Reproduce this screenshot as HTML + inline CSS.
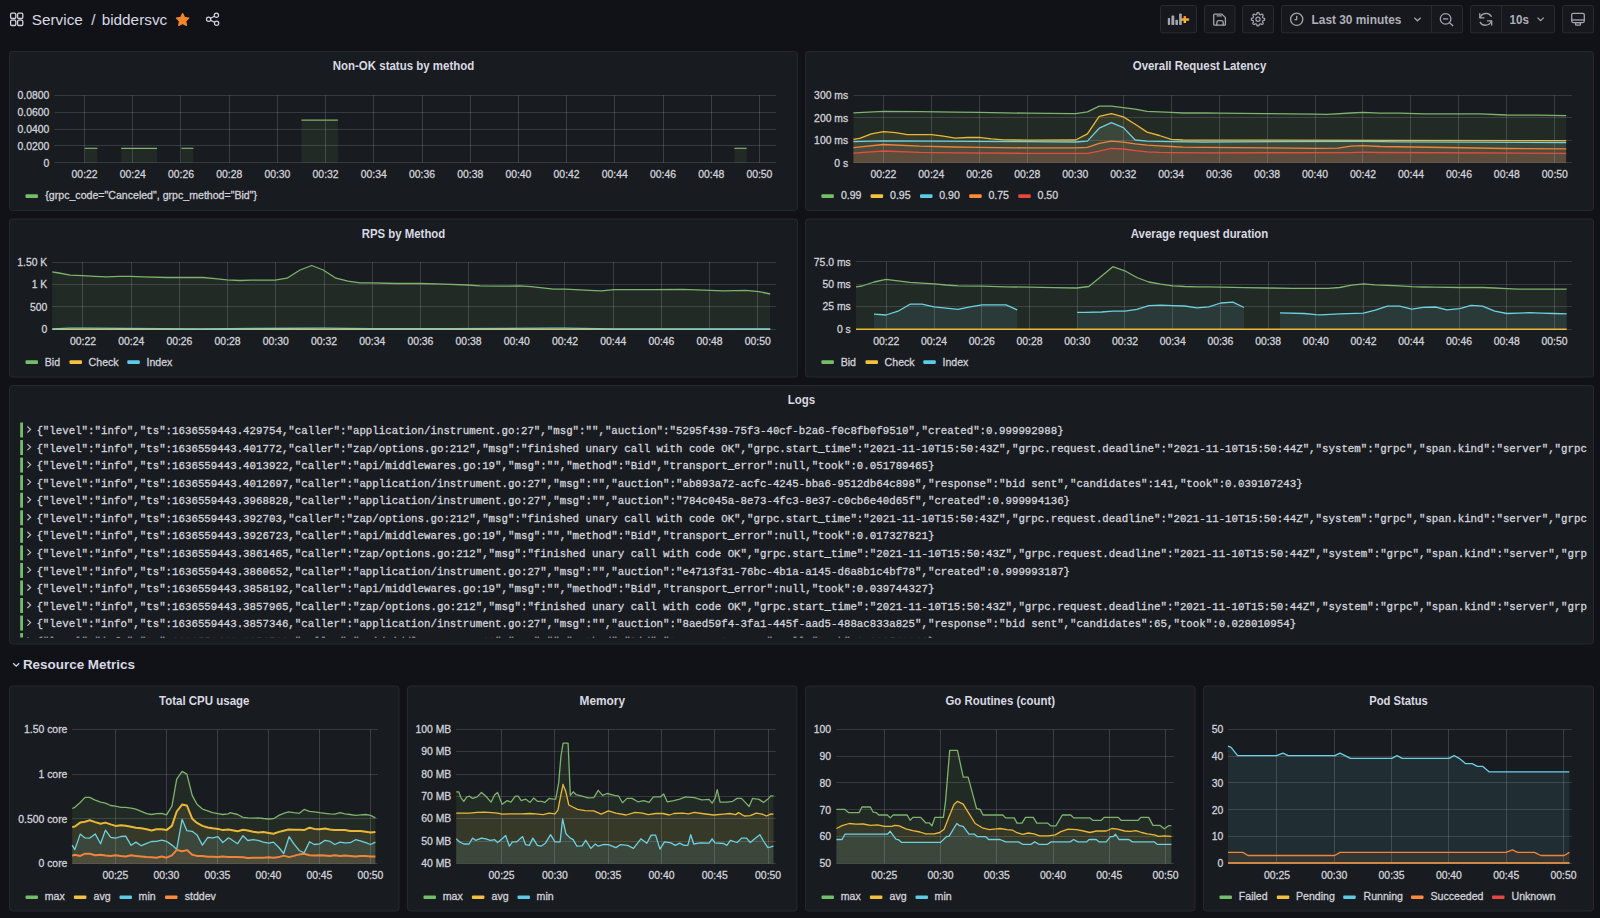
<!DOCTYPE html><html><head><meta charset="utf-8"><style>html,body{margin:0;padding:0;background:#111217;width:1600px;height:918px;overflow:hidden}svg{display:block}</style></head><body>
<svg width="1600" height="918" viewBox="0 0 1600 918">
<rect x="0" y="0" width="1600" height="918" rx="0" fill="#111217"/>
<rect x="10.6" y="13.2" width="5.2" height="5.3" rx="1.2" fill="none" stroke="#d2d3de" stroke-width="1.3"/>
<rect x="17.6" y="13.2" width="5.2" height="5.3" rx="1.2" fill="none" stroke="#d2d3de" stroke-width="1.3"/>
<rect x="10.6" y="20.2" width="5.2" height="5.3" rx="1.2" fill="none" stroke="#d2d3de" stroke-width="1.3"/>
<rect x="17.6" y="20.2" width="5.2" height="5.3" rx="1.2" fill="none" stroke="#d2d3de" stroke-width="1.3"/>
<text x="31.8" y="25.2" font-family="Liberation Sans" font-size="15.3" fill="#d8d9e3" text-anchor="start" font-weight="normal">Service</text>
<text x="91.3" y="25.2" font-family="Liberation Sans" font-size="15.3" fill="#d8d9e3" text-anchor="start" font-weight="normal">/</text>
<text x="101.7" y="25.2" font-family="Liberation Sans" font-size="15.3" fill="#d8d9e3" text-anchor="start" font-weight="normal" textLength="65.5" lengthAdjust="spacingAndGlyphs">biddersvc</text>
<polygon points="182.60,13.60 184.54,17.43 188.78,18.09 185.74,21.12 186.42,25.36 182.60,23.40 178.78,25.36 179.46,21.12 176.42,18.09 180.66,17.43" fill="#f0862a" stroke="#f0862a" stroke-width="1.3" stroke-linejoin="round"/>
<g fill="none" stroke="#d2d3de" stroke-width="1.2"><circle cx="216.4" cy="15.3" r="2.15"/><circle cx="208.6" cy="19.3" r="2.15"/><circle cx="216.6" cy="23.2" r="2.15"/><line x1="210.6" y1="18.2" x2="214.4" y2="16.3"/><line x1="210.6" y1="20.4" x2="214.6" y2="22.2"/></g>
<rect x="1160.5" y="5.5" width="36" height="27.3" rx="2" fill="#17181d" stroke="#2a2b31" stroke-width="1"/>
<rect x="1204.5" y="5.5" width="30.5" height="27.3" rx="2" fill="#17181d" stroke="#2a2b31" stroke-width="1"/>
<rect x="1242.5" y="5.5" width="31" height="27.3" rx="2" fill="#17181d" stroke="#2a2b31" stroke-width="1"/>
<rect x="1281.5" y="5.5" width="181" height="27.3" rx="2" fill="#17181d" stroke="#2a2b31" stroke-width="1"/>
<rect x="1470.5" y="5.5" width="84" height="27.3" rx="2" fill="#17181d" stroke="#2a2b31" stroke-width="1"/>
<rect x="1562.5" y="5.5" width="31" height="27.3" rx="2" fill="#17181d" stroke="#2a2b31" stroke-width="1"/>
<line x1="1431.5" y1="6" x2="1431.5" y2="32.5" stroke="#2a2b31"/>
<line x1="1501.5" y1="6" x2="1501.5" y2="32.5" stroke="#2a2b31"/>
<rect x="1167.8" y="18.1" width="2.3" height="6.899999999999999" rx="0.7" fill="#a3a4ae"/>
<rect x="1171.4" y="15.4" width="2.9" height="9.6" rx="0.7" fill="#a3a4ae"/>
<rect x="1175.4" y="19.8" width="2.6" height="5.199999999999999" rx="0.7" fill="#a3a4ae"/>
<rect x="1179.1" y="13.5" width="2.7" height="11.5" rx="0.7" fill="#a3a4ae"/>
<defs><linearGradient id="plusg" x1="0" y1="0" x2="0" y2="1"><stop offset="0" stop-color="#f47f2f"/><stop offset="1" stop-color="#f8d22a"/></linearGradient></defs>
<path d="M1183.6,15.9 h2.4 v2.4 h3.1 v2.4 h-3.1 v2.2 h-2.4 v-2.2 h-2.7 v-2.4 h2.7 z" fill="url(#plusg)"/>
<g fill="none" stroke="#a3a4ae" stroke-width="1.3" stroke-linejoin="round" stroke-linecap="round"><path d="M1214.6,14.1 h7.3 l3.5,3.5 v6.7 a0.9,0.9 0 0 1 -0.9,0.9 h-9.9 a0.9,0.9 0 0 1 -0.9,-0.9 v-9.3 a0.9,0.9 0 0 1 0.9,-0.9 z"/><path d="M1217.1,15.9 h4.2"/><path d="M1216.9,25 v-2.4 a1.9,1.9 0 0 1 1.9,-1.9 h2.5 a1.9,1.9 0 0 1 1.9,1.9 v2.4"/></g>
<polygon points="1264.65,19.30 1264.64,19.56 1264.61,19.82 1264.53,20.07 1264.30,20.30 1263.74,20.44 1263.18,20.54 1262.93,20.69 1262.82,20.87 1262.74,21.05 1262.67,21.23 1262.59,21.42 1262.51,21.60 1262.47,21.80 1262.54,22.08 1262.86,22.55 1263.16,23.05 1263.17,23.37 1263.04,23.61 1262.88,23.81 1262.70,24.00 1262.51,24.18 1262.31,24.34 1262.07,24.47 1261.75,24.46 1261.25,24.16 1260.78,23.84 1260.50,23.77 1260.30,23.81 1260.12,23.89 1259.93,23.97 1259.75,24.04 1259.57,24.12 1259.39,24.23 1259.24,24.48 1259.14,25.04 1259.00,25.60 1258.77,25.83 1258.52,25.91 1258.26,25.94 1258.00,25.95 1257.74,25.94 1257.48,25.91 1257.23,25.83 1257.00,25.60 1256.86,25.04 1256.76,24.48 1256.61,24.23 1256.43,24.12 1256.25,24.04 1256.07,23.97 1255.88,23.89 1255.70,23.81 1255.50,23.77 1255.22,23.84 1254.75,24.16 1254.25,24.46 1253.93,24.47 1253.69,24.34 1253.49,24.18 1253.30,24.00 1253.12,23.81 1252.96,23.61 1252.83,23.37 1252.84,23.05 1253.14,22.55 1253.46,22.08 1253.53,21.80 1253.49,21.60 1253.41,21.42 1253.33,21.23 1253.26,21.05 1253.18,20.87 1253.07,20.69 1252.82,20.54 1252.26,20.44 1251.70,20.30 1251.47,20.07 1251.39,19.82 1251.36,19.56 1251.35,19.30 1251.36,19.04 1251.39,18.78 1251.47,18.53 1251.70,18.30 1252.26,18.16 1252.82,18.06 1253.07,17.91 1253.18,17.73 1253.26,17.55 1253.33,17.37 1253.41,17.18 1253.49,17.00 1253.53,16.80 1253.46,16.52 1253.14,16.05 1252.84,15.55 1252.83,15.23 1252.96,14.99 1253.12,14.79 1253.30,14.60 1253.49,14.42 1253.69,14.26 1253.93,14.13 1254.25,14.14 1254.75,14.44 1255.22,14.76 1255.50,14.83 1255.70,14.79 1255.88,14.71 1256.07,14.63 1256.25,14.56 1256.43,14.48 1256.61,14.37 1256.76,14.12 1256.86,13.56 1257.00,13.00 1257.23,12.77 1257.48,12.69 1257.74,12.66 1258.00,12.65 1258.26,12.66 1258.52,12.69 1258.77,12.77 1259.00,13.00 1259.14,13.56 1259.24,14.12 1259.39,14.37 1259.57,14.48 1259.75,14.56 1259.93,14.63 1260.12,14.71 1260.30,14.79 1260.50,14.83 1260.78,14.76 1261.25,14.44 1261.75,14.14 1262.07,14.13 1262.31,14.26 1262.51,14.42 1262.70,14.60 1262.88,14.79 1263.04,14.99 1263.17,15.23 1263.16,15.55 1262.86,16.05 1262.54,16.52 1262.47,16.80 1262.51,17.00 1262.59,17.18 1262.67,17.37 1262.74,17.55 1262.82,17.73 1262.93,17.91 1263.18,18.06 1263.74,18.16 1264.30,18.30 1264.53,18.53 1264.61,18.78 1264.64,19.04" fill="none" stroke="#a3a4ae" stroke-width="1.25" stroke-linejoin="round"/>
<circle cx="1258.0" cy="19.3" r="2.1" fill="none" stroke="#a3a4ae" stroke-width="1.25"/>
<g fill="none" stroke="#a3a4ae" stroke-width="1.3"><circle cx="1296.7" cy="19.3" r="6.1"/><path d="M1296.7,15.8 v3.8 h-2.2"/></g>
<text x="1311.5" y="23.8" font-family="Liberation Sans" font-size="12" fill="#aeafb9" text-anchor="start" font-weight="bold" textLength="89.9" lengthAdjust="spacingAndGlyphs">Last 30 minutes</text>
<path d="M1414.4,17.8 l3.1,3 l3.1,-3" fill="none" stroke="#a3a4ae" stroke-width="1.3"/>
<g fill="none" stroke="#a3a4ae" stroke-width="1.3"><circle cx="1445.6" cy="18.9" r="5.3"/><line x1="1443" y1="18.9" x2="1448.2" y2="18.9"/><line x1="1449.5" y1="22.8" x2="1453.2" y2="26"/></g>
<g fill="none" stroke="#a3a4ae" stroke-width="1.3" stroke-linecap="round"><path d="M1480.2,17.6 a6.2,6.2 0 0 1 11.1,-1.2"/><path d="M1491.3,21.1 a6.2,6.2 0 0 1 -11.1,1.2"/><path d="M1479.8,13.6 v4.2 h4.2" stroke-linejoin="round"/><path d="M1491.7,25.1 v-4.2 h-4.2" stroke-linejoin="round"/></g>
<text x="1509.6" y="23.6" font-family="Liberation Sans" font-size="12" fill="#aeafb9" text-anchor="start" font-weight="bold" textLength="19.4" lengthAdjust="spacingAndGlyphs">10s</text>
<path d="M1537.5,17.6 l3.1,3 l3.1,-3" fill="none" stroke="#a3a4ae" stroke-width="1.3"/>
<g fill="none" stroke="#a3a4ae" stroke-width="1.3"><rect x="1571.7" y="13.3" width="12.6" height="9.3" rx="1.5"/><line x1="1572" y1="20" x2="1584" y2="20"/><rect x="1575.6" y="22.6" width="4.8" height="2.6" rx="0.6"/></g>
<rect x="9.5" y="51.5" width="788" height="159" rx="3" fill="#181b1f" stroke="#25282e" stroke-width="1"/>
<text x="403.5" y="70.0" font-family="Liberation Sans" font-size="12.6" fill="#d8d9e3" text-anchor="middle" font-weight="bold" textLength="141.5" lengthAdjust="spacingAndGlyphs">Non-OK status by method</text>
<rect x="805.5" y="51.5" width="788" height="159" rx="3" fill="#181b1f" stroke="#25282e" stroke-width="1"/>
<text x="1199.5" y="70.0" font-family="Liberation Sans" font-size="12.6" fill="#d8d9e3" text-anchor="middle" font-weight="bold" textLength="133.5" lengthAdjust="spacingAndGlyphs">Overall Request Latency</text>
<rect x="9.5" y="219.0" width="788" height="158.0" rx="3" fill="#181b1f" stroke="#25282e" stroke-width="1"/>
<text x="403.5" y="237.7" font-family="Liberation Sans" font-size="12.6" fill="#d8d9e3" text-anchor="middle" font-weight="bold" textLength="83.5" lengthAdjust="spacingAndGlyphs">RPS by Method</text>
<rect x="805.5" y="219.0" width="788" height="158.0" rx="3" fill="#181b1f" stroke="#25282e" stroke-width="1"/>
<text x="1199.5" y="237.7" font-family="Liberation Sans" font-size="12.6" fill="#d8d9e3" text-anchor="middle" font-weight="bold" textLength="137.5" lengthAdjust="spacingAndGlyphs">Average request duration</text>
<rect x="9.5" y="385.5" width="1584" height="258.5" rx="3" fill="#181b1f" stroke="#25282e" stroke-width="1"/>
<text x="801.5" y="404.0" font-family="Liberation Sans" font-size="12.6" fill="#d8d9e3" text-anchor="middle" font-weight="bold" textLength="27.5" lengthAdjust="spacingAndGlyphs">Logs</text>
<rect x="9.5" y="686.0" width="389.5" height="225.0" rx="3" fill="#181b1f" stroke="#25282e" stroke-width="1"/>
<text x="204.25" y="704.7" font-family="Liberation Sans" font-size="12.6" fill="#d8d9e3" text-anchor="middle" font-weight="bold" textLength="90.5" lengthAdjust="spacingAndGlyphs">Total CPU usage</text>
<rect x="407.5" y="686.0" width="389.5" height="225.0" rx="3" fill="#181b1f" stroke="#25282e" stroke-width="1"/>
<text x="602.25" y="704.7" font-family="Liberation Sans" font-size="12.6" fill="#d8d9e3" text-anchor="middle" font-weight="bold" textLength="45.5" lengthAdjust="spacingAndGlyphs">Memory</text>
<rect x="805.5" y="686.0" width="389.5" height="225.0" rx="3" fill="#181b1f" stroke="#25282e" stroke-width="1"/>
<text x="1000.25" y="704.7" font-family="Liberation Sans" font-size="12.6" fill="#d8d9e3" text-anchor="middle" font-weight="bold" textLength="109.5" lengthAdjust="spacingAndGlyphs">Go Routines (count)</text>
<rect x="1203.5" y="686.0" width="390" height="225.0" rx="3" fill="#181b1f" stroke="#25282e" stroke-width="1"/>
<text x="1398.5" y="704.7" font-family="Liberation Sans" font-size="12.6" fill="#d8d9e3" text-anchor="middle" font-weight="bold" textLength="58.5" lengthAdjust="spacingAndGlyphs">Pod Status</text>
<path d="M13.2,663.2 l3,3 l3,-3" fill="none" stroke="#d8d9e3" stroke-width="1.3"/>
<text x="22.9" y="669.3" font-family="Liberation Sans" font-size="13.6" fill="#d8d9e3" text-anchor="start" font-weight="bold" textLength="112" lengthAdjust="spacingAndGlyphs">Resource Metrics</text>
<text x="49.3" y="99.0" font-family="Liberation Sans" font-size="10.4" fill="#d0d1da" text-anchor="end" font-weight="normal" stroke="#d0d1da" stroke-width="0.3">0.0800</text>
<text x="49.3" y="115.875" font-family="Liberation Sans" font-size="10.4" fill="#d0d1da" text-anchor="end" font-weight="normal" stroke="#d0d1da" stroke-width="0.3">0.0600</text>
<text x="49.3" y="132.75" font-family="Liberation Sans" font-size="10.4" fill="#d0d1da" text-anchor="end" font-weight="normal" stroke="#d0d1da" stroke-width="0.3">0.0400</text>
<text x="49.3" y="149.625" font-family="Liberation Sans" font-size="10.4" fill="#d0d1da" text-anchor="end" font-weight="normal" stroke="#d0d1da" stroke-width="0.3">0.0200</text>
<text x="49.3" y="166.5" font-family="Liberation Sans" font-size="10.4" fill="#d0d1da" text-anchor="end" font-weight="normal" stroke="#d0d1da" stroke-width="0.3">0</text>
<text x="84.6" y="177.5" font-family="Liberation Sans" font-size="10.4" fill="#d0d1da" text-anchor="middle" font-weight="normal" stroke="#d0d1da" stroke-width="0.3">00:22</text>
<text x="132.8" y="177.5" font-family="Liberation Sans" font-size="10.4" fill="#d0d1da" text-anchor="middle" font-weight="normal" stroke="#d0d1da" stroke-width="0.3">00:24</text>
<text x="181.0" y="177.5" font-family="Liberation Sans" font-size="10.4" fill="#d0d1da" text-anchor="middle" font-weight="normal" stroke="#d0d1da" stroke-width="0.3">00:26</text>
<text x="229.20000000000002" y="177.5" font-family="Liberation Sans" font-size="10.4" fill="#d0d1da" text-anchor="middle" font-weight="normal" stroke="#d0d1da" stroke-width="0.3">00:28</text>
<text x="277.4" y="177.5" font-family="Liberation Sans" font-size="10.4" fill="#d0d1da" text-anchor="middle" font-weight="normal" stroke="#d0d1da" stroke-width="0.3">00:30</text>
<text x="325.6" y="177.5" font-family="Liberation Sans" font-size="10.4" fill="#d0d1da" text-anchor="middle" font-weight="normal" stroke="#d0d1da" stroke-width="0.3">00:32</text>
<text x="373.80000000000007" y="177.5" font-family="Liberation Sans" font-size="10.4" fill="#d0d1da" text-anchor="middle" font-weight="normal" stroke="#d0d1da" stroke-width="0.3">00:34</text>
<text x="422.0" y="177.5" font-family="Liberation Sans" font-size="10.4" fill="#d0d1da" text-anchor="middle" font-weight="normal" stroke="#d0d1da" stroke-width="0.3">00:36</text>
<text x="470.20000000000005" y="177.5" font-family="Liberation Sans" font-size="10.4" fill="#d0d1da" text-anchor="middle" font-weight="normal" stroke="#d0d1da" stroke-width="0.3">00:38</text>
<text x="518.4" y="177.5" font-family="Liberation Sans" font-size="10.4" fill="#d0d1da" text-anchor="middle" font-weight="normal" stroke="#d0d1da" stroke-width="0.3">00:40</text>
<text x="566.6" y="177.5" font-family="Liberation Sans" font-size="10.4" fill="#d0d1da" text-anchor="middle" font-weight="normal" stroke="#d0d1da" stroke-width="0.3">00:42</text>
<text x="614.8000000000001" y="177.5" font-family="Liberation Sans" font-size="10.4" fill="#d0d1da" text-anchor="middle" font-weight="normal" stroke="#d0d1da" stroke-width="0.3">00:44</text>
<text x="663.0000000000001" y="177.5" font-family="Liberation Sans" font-size="10.4" fill="#d0d1da" text-anchor="middle" font-weight="normal" stroke="#d0d1da" stroke-width="0.3">00:46</text>
<text x="711.2" y="177.5" font-family="Liberation Sans" font-size="10.4" fill="#d0d1da" text-anchor="middle" font-weight="normal" stroke="#d0d1da" stroke-width="0.3">00:48</text>
<text x="759.4000000000001" y="177.5" font-family="Liberation Sans" font-size="10.4" fill="#d0d1da" text-anchor="middle" font-weight="normal" stroke="#d0d1da" stroke-width="0.3">00:50</text>
<text x="848.2" y="99.0" font-family="Liberation Sans" font-size="10.4" fill="#d0d1da" text-anchor="end" font-weight="normal" stroke="#d0d1da" stroke-width="0.3">300 ms</text>
<text x="848.2" y="121.5" font-family="Liberation Sans" font-size="10.4" fill="#d0d1da" text-anchor="end" font-weight="normal" stroke="#d0d1da" stroke-width="0.3">200 ms</text>
<text x="848.2" y="144.0" font-family="Liberation Sans" font-size="10.4" fill="#d0d1da" text-anchor="end" font-weight="normal" stroke="#d0d1da" stroke-width="0.3">100 ms</text>
<text x="848.2" y="166.5" font-family="Liberation Sans" font-size="10.4" fill="#d0d1da" text-anchor="end" font-weight="normal" stroke="#d0d1da" stroke-width="0.3">0 s</text>
<text x="883.4" y="177.5" font-family="Liberation Sans" font-size="10.4" fill="#d0d1da" text-anchor="middle" font-weight="normal" stroke="#d0d1da" stroke-width="0.3">00:22</text>
<text x="931.36" y="177.5" font-family="Liberation Sans" font-size="10.4" fill="#d0d1da" text-anchor="middle" font-weight="normal" stroke="#d0d1da" stroke-width="0.3">00:24</text>
<text x="979.3199999999999" y="177.5" font-family="Liberation Sans" font-size="10.4" fill="#d0d1da" text-anchor="middle" font-weight="normal" stroke="#d0d1da" stroke-width="0.3">00:26</text>
<text x="1027.28" y="177.5" font-family="Liberation Sans" font-size="10.4" fill="#d0d1da" text-anchor="middle" font-weight="normal" stroke="#d0d1da" stroke-width="0.3">00:28</text>
<text x="1075.24" y="177.5" font-family="Liberation Sans" font-size="10.4" fill="#d0d1da" text-anchor="middle" font-weight="normal" stroke="#d0d1da" stroke-width="0.3">00:30</text>
<text x="1123.2" y="177.5" font-family="Liberation Sans" font-size="10.4" fill="#d0d1da" text-anchor="middle" font-weight="normal" stroke="#d0d1da" stroke-width="0.3">00:32</text>
<text x="1171.1599999999999" y="177.5" font-family="Liberation Sans" font-size="10.4" fill="#d0d1da" text-anchor="middle" font-weight="normal" stroke="#d0d1da" stroke-width="0.3">00:34</text>
<text x="1219.12" y="177.5" font-family="Liberation Sans" font-size="10.4" fill="#d0d1da" text-anchor="middle" font-weight="normal" stroke="#d0d1da" stroke-width="0.3">00:36</text>
<text x="1267.08" y="177.5" font-family="Liberation Sans" font-size="10.4" fill="#d0d1da" text-anchor="middle" font-weight="normal" stroke="#d0d1da" stroke-width="0.3">00:38</text>
<text x="1315.04" y="177.5" font-family="Liberation Sans" font-size="10.4" fill="#d0d1da" text-anchor="middle" font-weight="normal" stroke="#d0d1da" stroke-width="0.3">00:40</text>
<text x="1363.0" y="177.5" font-family="Liberation Sans" font-size="10.4" fill="#d0d1da" text-anchor="middle" font-weight="normal" stroke="#d0d1da" stroke-width="0.3">00:42</text>
<text x="1410.96" y="177.5" font-family="Liberation Sans" font-size="10.4" fill="#d0d1da" text-anchor="middle" font-weight="normal" stroke="#d0d1da" stroke-width="0.3">00:44</text>
<text x="1458.92" y="177.5" font-family="Liberation Sans" font-size="10.4" fill="#d0d1da" text-anchor="middle" font-weight="normal" stroke="#d0d1da" stroke-width="0.3">00:46</text>
<text x="1506.88" y="177.5" font-family="Liberation Sans" font-size="10.4" fill="#d0d1da" text-anchor="middle" font-weight="normal" stroke="#d0d1da" stroke-width="0.3">00:48</text>
<text x="1554.8400000000001" y="177.5" font-family="Liberation Sans" font-size="10.4" fill="#d0d1da" text-anchor="middle" font-weight="normal" stroke="#d0d1da" stroke-width="0.3">00:50</text>
<text x="47.3" y="265.9" font-family="Liberation Sans" font-size="10.4" fill="#d0d1da" text-anchor="end" font-weight="normal" stroke="#d0d1da" stroke-width="0.3">1.50 K</text>
<text x="47.3" y="288.2333333333333" font-family="Liberation Sans" font-size="10.4" fill="#d0d1da" text-anchor="end" font-weight="normal" stroke="#d0d1da" stroke-width="0.3">1 K</text>
<text x="47.3" y="310.56666666666666" font-family="Liberation Sans" font-size="10.4" fill="#d0d1da" text-anchor="end" font-weight="normal" stroke="#d0d1da" stroke-width="0.3">500</text>
<text x="47.3" y="332.9" font-family="Liberation Sans" font-size="10.4" fill="#d0d1da" text-anchor="end" font-weight="normal" stroke="#d0d1da" stroke-width="0.3">0</text>
<text x="83.0" y="345.0" font-family="Liberation Sans" font-size="10.4" fill="#d0d1da" text-anchor="middle" font-weight="normal" stroke="#d0d1da" stroke-width="0.3">00:22</text>
<text x="131.2" y="345.0" font-family="Liberation Sans" font-size="10.4" fill="#d0d1da" text-anchor="middle" font-weight="normal" stroke="#d0d1da" stroke-width="0.3">00:24</text>
<text x="179.4" y="345.0" font-family="Liberation Sans" font-size="10.4" fill="#d0d1da" text-anchor="middle" font-weight="normal" stroke="#d0d1da" stroke-width="0.3">00:26</text>
<text x="227.60000000000002" y="345.0" font-family="Liberation Sans" font-size="10.4" fill="#d0d1da" text-anchor="middle" font-weight="normal" stroke="#d0d1da" stroke-width="0.3">00:28</text>
<text x="275.8" y="345.0" font-family="Liberation Sans" font-size="10.4" fill="#d0d1da" text-anchor="middle" font-weight="normal" stroke="#d0d1da" stroke-width="0.3">00:30</text>
<text x="324.0" y="345.0" font-family="Liberation Sans" font-size="10.4" fill="#d0d1da" text-anchor="middle" font-weight="normal" stroke="#d0d1da" stroke-width="0.3">00:32</text>
<text x="372.20000000000005" y="345.0" font-family="Liberation Sans" font-size="10.4" fill="#d0d1da" text-anchor="middle" font-weight="normal" stroke="#d0d1da" stroke-width="0.3">00:34</text>
<text x="420.40000000000003" y="345.0" font-family="Liberation Sans" font-size="10.4" fill="#d0d1da" text-anchor="middle" font-weight="normal" stroke="#d0d1da" stroke-width="0.3">00:36</text>
<text x="468.6" y="345.0" font-family="Liberation Sans" font-size="10.4" fill="#d0d1da" text-anchor="middle" font-weight="normal" stroke="#d0d1da" stroke-width="0.3">00:38</text>
<text x="516.8" y="345.0" font-family="Liberation Sans" font-size="10.4" fill="#d0d1da" text-anchor="middle" font-weight="normal" stroke="#d0d1da" stroke-width="0.3">00:40</text>
<text x="565.0" y="345.0" font-family="Liberation Sans" font-size="10.4" fill="#d0d1da" text-anchor="middle" font-weight="normal" stroke="#d0d1da" stroke-width="0.3">00:42</text>
<text x="613.2" y="345.0" font-family="Liberation Sans" font-size="10.4" fill="#d0d1da" text-anchor="middle" font-weight="normal" stroke="#d0d1da" stroke-width="0.3">00:44</text>
<text x="661.4000000000001" y="345.0" font-family="Liberation Sans" font-size="10.4" fill="#d0d1da" text-anchor="middle" font-weight="normal" stroke="#d0d1da" stroke-width="0.3">00:46</text>
<text x="709.6" y="345.0" font-family="Liberation Sans" font-size="10.4" fill="#d0d1da" text-anchor="middle" font-weight="normal" stroke="#d0d1da" stroke-width="0.3">00:48</text>
<text x="757.8000000000001" y="345.0" font-family="Liberation Sans" font-size="10.4" fill="#d0d1da" text-anchor="middle" font-weight="normal" stroke="#d0d1da" stroke-width="0.3">00:50</text>
<text x="850.8" y="265.5" font-family="Liberation Sans" font-size="10.4" fill="#d0d1da" text-anchor="end" font-weight="normal" stroke="#d0d1da" stroke-width="0.3">75.0 ms</text>
<text x="850.8" y="287.96666666666664" font-family="Liberation Sans" font-size="10.4" fill="#d0d1da" text-anchor="end" font-weight="normal" stroke="#d0d1da" stroke-width="0.3">50 ms</text>
<text x="850.8" y="310.43333333333334" font-family="Liberation Sans" font-size="10.4" fill="#d0d1da" text-anchor="end" font-weight="normal" stroke="#d0d1da" stroke-width="0.3">25 ms</text>
<text x="850.8" y="332.9" font-family="Liberation Sans" font-size="10.4" fill="#d0d1da" text-anchor="end" font-weight="normal" stroke="#d0d1da" stroke-width="0.3">0 s</text>
<text x="886.3" y="345.0" font-family="Liberation Sans" font-size="10.4" fill="#d0d1da" text-anchor="middle" font-weight="normal" stroke="#d0d1da" stroke-width="0.3">00:22</text>
<text x="934.03" y="345.0" font-family="Liberation Sans" font-size="10.4" fill="#d0d1da" text-anchor="middle" font-weight="normal" stroke="#d0d1da" stroke-width="0.3">00:24</text>
<text x="981.76" y="345.0" font-family="Liberation Sans" font-size="10.4" fill="#d0d1da" text-anchor="middle" font-weight="normal" stroke="#d0d1da" stroke-width="0.3">00:26</text>
<text x="1029.49" y="345.0" font-family="Liberation Sans" font-size="10.4" fill="#d0d1da" text-anchor="middle" font-weight="normal" stroke="#d0d1da" stroke-width="0.3">00:28</text>
<text x="1077.22" y="345.0" font-family="Liberation Sans" font-size="10.4" fill="#d0d1da" text-anchor="middle" font-weight="normal" stroke="#d0d1da" stroke-width="0.3">00:30</text>
<text x="1124.9499999999998" y="345.0" font-family="Liberation Sans" font-size="10.4" fill="#d0d1da" text-anchor="middle" font-weight="normal" stroke="#d0d1da" stroke-width="0.3">00:32</text>
<text x="1172.6799999999998" y="345.0" font-family="Liberation Sans" font-size="10.4" fill="#d0d1da" text-anchor="middle" font-weight="normal" stroke="#d0d1da" stroke-width="0.3">00:34</text>
<text x="1220.4099999999999" y="345.0" font-family="Liberation Sans" font-size="10.4" fill="#d0d1da" text-anchor="middle" font-weight="normal" stroke="#d0d1da" stroke-width="0.3">00:36</text>
<text x="1268.1399999999999" y="345.0" font-family="Liberation Sans" font-size="10.4" fill="#d0d1da" text-anchor="middle" font-weight="normal" stroke="#d0d1da" stroke-width="0.3">00:38</text>
<text x="1315.87" y="345.0" font-family="Liberation Sans" font-size="10.4" fill="#d0d1da" text-anchor="middle" font-weight="normal" stroke="#d0d1da" stroke-width="0.3">00:40</text>
<text x="1363.6" y="345.0" font-family="Liberation Sans" font-size="10.4" fill="#d0d1da" text-anchor="middle" font-weight="normal" stroke="#d0d1da" stroke-width="0.3">00:42</text>
<text x="1411.33" y="345.0" font-family="Liberation Sans" font-size="10.4" fill="#d0d1da" text-anchor="middle" font-weight="normal" stroke="#d0d1da" stroke-width="0.3">00:44</text>
<text x="1459.06" y="345.0" font-family="Liberation Sans" font-size="10.4" fill="#d0d1da" text-anchor="middle" font-weight="normal" stroke="#d0d1da" stroke-width="0.3">00:46</text>
<text x="1506.79" y="345.0" font-family="Liberation Sans" font-size="10.4" fill="#d0d1da" text-anchor="middle" font-weight="normal" stroke="#d0d1da" stroke-width="0.3">00:48</text>
<text x="1554.52" y="345.0" font-family="Liberation Sans" font-size="10.4" fill="#d0d1da" text-anchor="middle" font-weight="normal" stroke="#d0d1da" stroke-width="0.3">00:50</text>
<text x="67.4" y="733.1" font-family="Liberation Sans" font-size="10.4" fill="#d0d1da" text-anchor="end" font-weight="normal" stroke="#d0d1da" stroke-width="0.3">1.50 core</text>
<text x="67.4" y="777.8666666666667" font-family="Liberation Sans" font-size="10.4" fill="#d0d1da" text-anchor="end" font-weight="normal" stroke="#d0d1da" stroke-width="0.3">1 core</text>
<text x="67.4" y="822.6333333333334" font-family="Liberation Sans" font-size="10.4" fill="#d0d1da" text-anchor="end" font-weight="normal" stroke="#d0d1da" stroke-width="0.3">0.500 core</text>
<text x="67.4" y="867.4000000000001" font-family="Liberation Sans" font-size="10.4" fill="#d0d1da" text-anchor="end" font-weight="normal" stroke="#d0d1da" stroke-width="0.3">0 core</text>
<text x="115.4" y="879.4" font-family="Liberation Sans" font-size="10.4" fill="#d0d1da" text-anchor="middle" font-weight="normal" stroke="#d0d1da" stroke-width="0.3">00:25</text>
<text x="166.4" y="879.4" font-family="Liberation Sans" font-size="10.4" fill="#d0d1da" text-anchor="middle" font-weight="normal" stroke="#d0d1da" stroke-width="0.3">00:30</text>
<text x="217.4" y="879.4" font-family="Liberation Sans" font-size="10.4" fill="#d0d1da" text-anchor="middle" font-weight="normal" stroke="#d0d1da" stroke-width="0.3">00:35</text>
<text x="268.4" y="879.4" font-family="Liberation Sans" font-size="10.4" fill="#d0d1da" text-anchor="middle" font-weight="normal" stroke="#d0d1da" stroke-width="0.3">00:40</text>
<text x="319.4" y="879.4" font-family="Liberation Sans" font-size="10.4" fill="#d0d1da" text-anchor="middle" font-weight="normal" stroke="#d0d1da" stroke-width="0.3">00:45</text>
<text x="370.4" y="879.4" font-family="Liberation Sans" font-size="10.4" fill="#d0d1da" text-anchor="middle" font-weight="normal" stroke="#d0d1da" stroke-width="0.3">00:50</text>
<text x="451.3" y="733.0" font-family="Liberation Sans" font-size="10.4" fill="#d0d1da" text-anchor="end" font-weight="normal" stroke="#d0d1da" stroke-width="0.3">100 MB</text>
<text x="451.3" y="755.3666666666667" font-family="Liberation Sans" font-size="10.4" fill="#d0d1da" text-anchor="end" font-weight="normal" stroke="#d0d1da" stroke-width="0.3">90 MB</text>
<text x="451.3" y="777.7333333333333" font-family="Liberation Sans" font-size="10.4" fill="#d0d1da" text-anchor="end" font-weight="normal" stroke="#d0d1da" stroke-width="0.3">80 MB</text>
<text x="451.3" y="800.1" font-family="Liberation Sans" font-size="10.4" fill="#d0d1da" text-anchor="end" font-weight="normal" stroke="#d0d1da" stroke-width="0.3">70 MB</text>
<text x="451.3" y="822.4666666666667" font-family="Liberation Sans" font-size="10.4" fill="#d0d1da" text-anchor="end" font-weight="normal" stroke="#d0d1da" stroke-width="0.3">60 MB</text>
<text x="451.3" y="844.8333333333334" font-family="Liberation Sans" font-size="10.4" fill="#d0d1da" text-anchor="end" font-weight="normal" stroke="#d0d1da" stroke-width="0.3">50 MB</text>
<text x="451.3" y="867.2" font-family="Liberation Sans" font-size="10.4" fill="#d0d1da" text-anchor="end" font-weight="normal" stroke="#d0d1da" stroke-width="0.3">40 MB</text>
<text x="501.6" y="879.4" font-family="Liberation Sans" font-size="10.4" fill="#d0d1da" text-anchor="middle" font-weight="normal" stroke="#d0d1da" stroke-width="0.3">00:25</text>
<text x="554.9" y="879.4" font-family="Liberation Sans" font-size="10.4" fill="#d0d1da" text-anchor="middle" font-weight="normal" stroke="#d0d1da" stroke-width="0.3">00:30</text>
<text x="608.2" y="879.4" font-family="Liberation Sans" font-size="10.4" fill="#d0d1da" text-anchor="middle" font-weight="normal" stroke="#d0d1da" stroke-width="0.3">00:35</text>
<text x="661.5" y="879.4" font-family="Liberation Sans" font-size="10.4" fill="#d0d1da" text-anchor="middle" font-weight="normal" stroke="#d0d1da" stroke-width="0.3">00:40</text>
<text x="714.8" y="879.4" font-family="Liberation Sans" font-size="10.4" fill="#d0d1da" text-anchor="middle" font-weight="normal" stroke="#d0d1da" stroke-width="0.3">00:45</text>
<text x="768.1" y="879.4" font-family="Liberation Sans" font-size="10.4" fill="#d0d1da" text-anchor="middle" font-weight="normal" stroke="#d0d1da" stroke-width="0.3">00:50</text>
<text x="831.1" y="733.0" font-family="Liberation Sans" font-size="10.4" fill="#d0d1da" text-anchor="end" font-weight="normal" stroke="#d0d1da" stroke-width="0.3">100</text>
<text x="831.1" y="759.84" font-family="Liberation Sans" font-size="10.4" fill="#d0d1da" text-anchor="end" font-weight="normal" stroke="#d0d1da" stroke-width="0.3">90</text>
<text x="831.1" y="786.6800000000001" font-family="Liberation Sans" font-size="10.4" fill="#d0d1da" text-anchor="end" font-weight="normal" stroke="#d0d1da" stroke-width="0.3">80</text>
<text x="831.1" y="813.52" font-family="Liberation Sans" font-size="10.4" fill="#d0d1da" text-anchor="end" font-weight="normal" stroke="#d0d1da" stroke-width="0.3">70</text>
<text x="831.1" y="840.36" font-family="Liberation Sans" font-size="10.4" fill="#d0d1da" text-anchor="end" font-weight="normal" stroke="#d0d1da" stroke-width="0.3">60</text>
<text x="831.1" y="867.2" font-family="Liberation Sans" font-size="10.4" fill="#d0d1da" text-anchor="end" font-weight="normal" stroke="#d0d1da" stroke-width="0.3">50</text>
<text x="884.3" y="879.4" font-family="Liberation Sans" font-size="10.4" fill="#d0d1da" text-anchor="middle" font-weight="normal" stroke="#d0d1da" stroke-width="0.3">00:25</text>
<text x="940.54" y="879.4" font-family="Liberation Sans" font-size="10.4" fill="#d0d1da" text-anchor="middle" font-weight="normal" stroke="#d0d1da" stroke-width="0.3">00:30</text>
<text x="996.78" y="879.4" font-family="Liberation Sans" font-size="10.4" fill="#d0d1da" text-anchor="middle" font-weight="normal" stroke="#d0d1da" stroke-width="0.3">00:35</text>
<text x="1053.02" y="879.4" font-family="Liberation Sans" font-size="10.4" fill="#d0d1da" text-anchor="middle" font-weight="normal" stroke="#d0d1da" stroke-width="0.3">00:40</text>
<text x="1109.26" y="879.4" font-family="Liberation Sans" font-size="10.4" fill="#d0d1da" text-anchor="middle" font-weight="normal" stroke="#d0d1da" stroke-width="0.3">00:45</text>
<text x="1165.5" y="879.4" font-family="Liberation Sans" font-size="10.4" fill="#d0d1da" text-anchor="middle" font-weight="normal" stroke="#d0d1da" stroke-width="0.3">00:50</text>
<text x="1223.3" y="733.0" font-family="Liberation Sans" font-size="10.4" fill="#d0d1da" text-anchor="end" font-weight="normal" stroke="#d0d1da" stroke-width="0.3">50</text>
<text x="1223.3" y="759.84" font-family="Liberation Sans" font-size="10.4" fill="#d0d1da" text-anchor="end" font-weight="normal" stroke="#d0d1da" stroke-width="0.3">40</text>
<text x="1223.3" y="786.6800000000001" font-family="Liberation Sans" font-size="10.4" fill="#d0d1da" text-anchor="end" font-weight="normal" stroke="#d0d1da" stroke-width="0.3">30</text>
<text x="1223.3" y="813.52" font-family="Liberation Sans" font-size="10.4" fill="#d0d1da" text-anchor="end" font-weight="normal" stroke="#d0d1da" stroke-width="0.3">20</text>
<text x="1223.3" y="840.36" font-family="Liberation Sans" font-size="10.4" fill="#d0d1da" text-anchor="end" font-weight="normal" stroke="#d0d1da" stroke-width="0.3">10</text>
<text x="1223.3" y="867.2" font-family="Liberation Sans" font-size="10.4" fill="#d0d1da" text-anchor="end" font-weight="normal" stroke="#d0d1da" stroke-width="0.3">0</text>
<text x="1277.0" y="879.4" font-family="Liberation Sans" font-size="10.4" fill="#d0d1da" text-anchor="middle" font-weight="normal" stroke="#d0d1da" stroke-width="0.3">00:25</text>
<text x="1334.3" y="879.4" font-family="Liberation Sans" font-size="10.4" fill="#d0d1da" text-anchor="middle" font-weight="normal" stroke="#d0d1da" stroke-width="0.3">00:30</text>
<text x="1391.6" y="879.4" font-family="Liberation Sans" font-size="10.4" fill="#d0d1da" text-anchor="middle" font-weight="normal" stroke="#d0d1da" stroke-width="0.3">00:35</text>
<text x="1448.9" y="879.4" font-family="Liberation Sans" font-size="10.4" fill="#d0d1da" text-anchor="middle" font-weight="normal" stroke="#d0d1da" stroke-width="0.3">00:40</text>
<text x="1506.2" y="879.4" font-family="Liberation Sans" font-size="10.4" fill="#d0d1da" text-anchor="middle" font-weight="normal" stroke="#d0d1da" stroke-width="0.3">00:45</text>
<text x="1563.5" y="879.4" font-family="Liberation Sans" font-size="10.4" fill="#d0d1da" text-anchor="middle" font-weight="normal" stroke="#d0d1da" stroke-width="0.3">00:50</text>
<polygon points="84.7,162.8 84.7,148.3 97.4,148.3 97.4,162.8" fill="#7EB26D" fill-opacity="0.1" stroke="none"/>
<polygon points="121.2,162.8 121.2,148.3 157.1,148.3 157.1,162.8" fill="#7EB26D" fill-opacity="0.1" stroke="none"/>
<polygon points="181.4,162.8 181.4,148.3 193.4,148.3 193.4,162.8" fill="#7EB26D" fill-opacity="0.1" stroke="none"/>
<polygon points="301.4,162.8 301.4,120.1 337.9,120.1 337.9,162.8" fill="#7EB26D" fill-opacity="0.1" stroke="none"/>
<polygon points="734.4,162.8 734.4,148.3 746.7,148.3 746.7,162.8" fill="#7EB26D" fill-opacity="0.1" stroke="none"/>
<polygon points="853.4,162.8 853.4,112.8 883.5,111.3 919.5,111.7 955.2,112.1 979.4,112.4 1027.2,113.2 1075.6,113.6 1087.4,111.9 1099.2,106.2 1111.4,106.2 1123.4,107.6 1135.2,109.1 1147.1,111.3 1159.4,111.9 1171.3,112.4 1183.1,113.0 1205.0,113.0 1219.0,113.2 1267.5,113.6 1314.8,114.1 1327.1,114.3 1350.8,113.0 1363.1,112.4 1380.0,113.2 1400.0,113.1 1425.0,113.8 1481.0,113.8 1506.0,115.0 1537.5,115.2 1566.2,115.6 1566.2,162.8" fill="#7EB26D" fill-opacity="0.1" stroke="none"/>
<polygon points="853.4,162.8 853.4,139.4 859.6,138.3 871.4,133.8 883.5,131.6 895.6,132.7 907.4,134.6 919.5,134.6 931.6,134.6 943.4,136.1 955.2,138.1 967.6,137.5 979.4,137.4 991.2,138.9 1003.6,139.8 1015.4,140.0 1027.2,140.2 1075.6,140.0 1087.4,133.8 1099.2,116.4 1111.4,113.6 1123.4,116.9 1135.2,124.2 1147.1,132.1 1159.4,135.5 1171.3,139.4 1183.1,140.0 1566.2,140.6 1566.2,162.8" fill="#EAB839" fill-opacity="0.1" stroke="none"/>
<polygon points="853.4,162.8 853.4,141.7 883.5,140.9 1027.2,141.7 1075.6,142.0 1087.4,141.1 1099.2,128.2 1111.4,122.6 1123.4,127.6 1135.2,140.0 1147.1,141.1 1171.3,141.7 1205.0,142.0 1362.0,141.3 1400.0,141.9 1566.2,142.5 1566.2,162.8" fill="#6ED0E0" fill-opacity="0.1" stroke="none"/>
<polygon points="853.4,162.8 853.4,147.6 883.5,144.5 919.5,146.2 955.2,147.0 979.4,147.3 1027.2,147.9 1075.6,147.9 1087.4,147.3 1099.2,143.4 1111.4,141.1 1123.4,142.2 1135.2,143.9 1147.1,145.1 1159.4,145.8 1171.3,146.5 1183.1,147.1 1205.0,147.3 1267.5,147.9 1314.8,148.4 1338.0,148.1 1350.8,146.2 1363.1,145.6 1380.0,146.5 1446.0,147.5 1506.0,148.5 1566.2,148.8 1566.2,162.8" fill="#EF843C" fill-opacity="0.1" stroke="none"/>
<polygon points="853.4,162.8 853.4,153.2 883.5,151.0 919.5,152.4 955.2,152.9 1027.2,153.3 1087.4,153.3 1099.2,151.2 1111.4,148.4 1123.4,149.0 1135.2,150.7 1147.1,151.8 1159.4,152.4 1171.3,152.7 1205.0,152.9 1350.8,152.6 1363.1,152.1 1380.0,152.5 1566.2,153.4 1566.2,162.8" fill="#E24D42" fill-opacity="0.1" stroke="none"/>
<polygon points="52.2,329.2 52.2,271.8 59.0,273.0 70.2,275.2 82.2,275.7 95.0,276.4 106.2,276.8 119.0,276.4 131.0,276.4 143.0,276.8 167.0,277.5 191.0,277.5 203.0,277.5 215.0,278.7 227.0,279.8 239.8,280.5 251.0,280.2 275.0,280.2 287.0,278.2 300.0,270.0 311.7,265.5 323.2,270.0 336.0,278.2 348.0,281.2 360.0,282.8 372.0,282.8 396.0,283.5 420.0,283.5 444.0,284.2 468.0,285.0 480.0,285.8 504.0,286.2 520.0,285.9 531.4,286.7 553.3,289.1 565.5,289.1 589.9,290.4 601.2,290.8 614.2,289.6 650.0,289.6 682.5,289.4 710.1,290.4 723.1,290.8 745.9,290.4 758.9,291.6 770.2,294.0 770.2,329.2" fill="#7EB26D" fill-opacity="0.1" stroke="none"/>
<polygon points="52.2,329.2 52.2,329.4 770.2,329.4 770.2,329.2" fill="#EAB839" fill-opacity="0.1" stroke="none"/>
<polygon points="52.2,329.2 52.2,328.8 70.0,328.1 85.0,328.1 200.0,328.8 323.0,328.1 372.0,328.6 450.0,328.6 553.0,328.1 565.0,328.1 614.0,328.9 770.2,329.0 770.2,329.2" fill="#6ED0E0" fill-opacity="0.1" stroke="none"/>
<polygon points="856.0,329.2 856.0,286.8 862.0,286.0 874.0,282.0 886.0,279.4 898.0,280.8 910.0,282.4 922.0,283.2 934.0,283.9 946.0,285.0 958.0,285.8 982.0,286.2 1006.0,286.8 1030.0,287.2 1054.0,287.6 1076.5,288.0 1088.8,286.5 1100.8,276.8 1112.8,266.7 1124.8,270.8 1136.8,277.5 1148.8,282.0 1160.8,284.2 1172.8,285.8 1184.8,286.5 1196.8,286.8 1208.8,286.8 1220.8,287.2 1244.8,287.7 1268.8,288.0 1292.8,288.3 1328.1,288.3 1339.5,287.5 1351.7,285.1 1363.5,283.9 1375.2,284.8 1387.4,285.4 1399.6,285.9 1411.8,286.7 1423.2,287.0 1435.4,287.2 1459.8,287.5 1482.5,287.5 1494.7,288.0 1506.9,288.6 1518.2,289.1 1541.0,289.1 1566.7,289.1 1566.7,329.2" fill="#7EB26D" fill-opacity="0.1" stroke="none"/>
<polygon points="856.0,329.2 856.0,329.2 1566.7,329.2 1566.7,329.2" fill="#EAB839" fill-opacity="0.1" stroke="none"/>
<polygon points="874.0,329.2 874.0,314.2 886.0,315.0 898.0,311.2 910.0,304.2 922.0,304.2 934.0,306.8 946.0,308.2 958.0,309.4 970.0,306.8 982.0,304.8 1006.0,304.8 1017.2,309.8 1017.2,329.2" fill="#6ED0E0" fill-opacity="0.1" stroke="none"/>
<polygon points="1077.2,329.2 1077.2,312.3 1085.0,312.3 1101.5,312.0 1112.8,311.2 1124.8,311.2 1136.8,309.3 1148.8,305.6 1160.8,305.2 1172.8,305.7 1184.8,306.0 1196.8,307.8 1208.8,306.8 1220.8,303.0 1232.8,302.2 1244.0,307.5 1244.0,329.2" fill="#6ED0E0" fill-opacity="0.1" stroke="none"/>
<polygon points="1280.0,329.2 1280.0,312.8 1304.0,313.5 1316.0,314.7 1320.0,314.8 1339.5,313.8 1363.5,313.2 1375.2,310.2 1387.4,306.2 1399.6,306.2 1411.8,309.1 1423.2,307.3 1435.4,307.0 1446.8,309.9 1459.8,308.6 1471.1,305.4 1482.5,306.2 1494.7,311.1 1506.9,313.5 1518.2,313.2 1529.6,312.7 1541.0,313.2 1554.0,313.5 1566.7,313.8 1566.7,329.2" fill="#6ED0E0" fill-opacity="0.1" stroke="none"/>
<polygon points="72.2,863.7 72.2,808.5 74.8,807.3 80.2,802.5 85.0,797.4 89.8,797.4 95.2,800.1 100.6,802.2 105.4,803.1 110.7,805.5 115.5,806.1 120.9,807.3 125.7,807.3 131.1,808.2 135.9,809.1 141.3,811.3 146.7,813.7 151.5,814.5 156.3,813.7 161.7,813.3 166.5,814.9 171.9,806.1 176.7,779.2 182.1,771.4 186.9,774.1 192.2,795.4 197.0,804.3 202.4,809.1 207.8,810.9 212.6,812.7 218.0,813.7 222.8,814.5 228.2,813.9 229.8,812.7 237.6,814.5 243.0,817.3 247.8,817.8 253.2,818.1 258.0,817.8 263.4,818.5 268.7,819.0 273.5,818.7 278.9,815.4 283.7,813.3 288.5,811.8 293.9,812.7 299.3,813.3 304.1,809.4 309.5,811.3 314.3,811.8 319.7,812.7 325.1,813.3 329.9,813.9 334.7,814.2 340.1,812.7 344.8,813.9 350.2,814.5 355.6,815.4 360.4,814.9 365.8,814.5 370.6,815.4 375.4,817.8 375.4,863.7" fill="#7EB26D" fill-opacity="0.1" stroke="none"/>
<polygon points="72.2,863.7 72.2,827.1 74.8,826.5 80.2,822.6 85.0,821.7 89.8,820.2 95.2,822.1 100.6,823.8 105.4,822.6 110.7,824.4 115.5,825.9 120.9,825.3 125.7,825.7 131.1,826.8 135.9,827.8 141.3,828.3 146.7,829.2 151.5,830.5 156.3,829.2 161.7,829.3 166.5,830.1 171.9,825.9 176.7,811.5 182.1,804.6 186.9,805.5 192.2,818.7 197.0,822.9 202.4,825.9 207.8,827.5 212.6,828.3 218.0,828.9 222.8,830.1 228.2,829.5 229.8,829.8 237.6,831.3 243.0,829.8 247.8,830.5 253.2,831.7 258.0,832.6 263.4,832.1 268.7,832.9 273.5,833.7 278.9,831.9 283.7,830.7 288.5,829.5 293.9,829.8 299.3,829.8 304.1,830.1 309.5,827.7 314.3,828.9 319.7,829.3 325.1,828.6 329.9,829.5 334.7,830.1 340.1,830.1 344.8,829.9 350.2,830.9 355.6,830.9 360.4,830.9 365.8,831.7 370.6,832.5 375.4,831.9 375.4,863.7" fill="#EAB839" fill-opacity="0.1" stroke="none"/>
<polygon points="72.2,863.7 72.2,845.1 74.8,849.6 80.2,834.1 85.0,837.9 89.8,838.1 95.2,833.9 100.6,843.7 105.4,830.1 110.7,837.3 115.5,838.1 120.9,836.5 125.7,836.1 131.1,845.3 135.9,842.1 141.3,845.7 146.7,843.3 151.5,841.5 156.3,841.3 161.7,840.1 166.5,841.3 171.9,845.1 176.7,849.3 182.1,819.3 186.9,830.7 192.2,831.3 197.0,834.9 202.4,845.1 207.8,837.3 212.6,837.9 218.0,836.7 222.8,842.5 228.2,837.9 229.8,838.5 237.6,843.7 243.0,835.7 247.8,840.5 253.2,839.7 258.0,840.3 263.4,842.1 268.7,843.1 273.5,842.1 278.9,847.5 283.7,853.5 289.1,836.7 293.9,843.9 299.3,850.5 304.1,852.9 309.5,841.7 314.3,844.5 319.7,843.9 325.1,840.3 329.9,841.3 334.7,844.5 340.1,842.1 344.8,842.9 350.2,842.7 355.6,839.7 360.4,840.9 365.8,842.7 370.6,844.5 375.4,842.1 375.4,863.7" fill="#6ED0E0" fill-opacity="0.1" stroke="none"/>
<polygon points="72.2,863.7 72.2,855.9 74.8,854.7 80.2,855.9 85.0,853.7 89.8,853.7 95.2,855.3 100.6,854.7 105.4,855.6 110.7,855.9 115.5,855.3 120.9,856.1 125.7,856.5 131.1,855.3 135.9,855.9 141.3,856.5 146.7,857.1 151.5,857.3 156.3,857.7 161.7,856.5 166.5,857.7 171.9,855.3 176.7,849.9 182.1,851.3 186.9,850.1 192.2,854.7 197.0,855.9 202.4,855.9 207.8,856.8 212.6,856.8 218.0,857.1 222.8,856.5 228.2,857.1 229.8,857.1 237.6,857.1 243.0,857.3 247.8,858.0 253.2,857.7 258.0,857.7 263.4,857.7 268.7,857.3 273.5,857.7 278.9,857.1 283.7,855.6 289.1,857.1 293.9,855.9 299.3,854.4 304.1,853.7 309.5,855.3 314.3,855.6 319.7,855.3 325.1,855.6 329.9,856.1 334.7,855.3 340.1,855.9 344.8,855.6 350.2,855.9 355.6,856.5 360.4,856.1 365.8,855.9 370.6,856.5 375.4,856.5 375.4,863.7" fill="#EF843C" fill-opacity="0.1" stroke="none"/>
<polygon points="456.2,863.5 456.2,791.8 458.7,791.8 460.9,797.6 463.8,801.3 466.8,796.9 469.7,796.2 472.6,798.4 477.1,796.9 481.5,792.5 485.9,796.2 491.0,802.1 494.7,794.7 497.6,792.5 502.1,804.3 507.2,800.6 510.9,802.1 515.3,796.2 518.2,796.2 521.2,800.6 525.6,799.1 530.0,802.4 533.7,797.9 537.4,801.3 541.8,801.3 544.7,802.4 549.1,798.4 553.5,799.1 555.7,799.1 558.7,782.9 560.9,756.5 563.1,743.2 568.1,743.2 570.3,795.4 573.2,791.8 576.2,794.7 582.1,796.2 587.9,797.9 593.8,797.6 598.2,790.3 602.6,795.4 607.1,793.5 614.4,795.4 618.8,796.2 622.5,802.8 626.9,798.4 632.1,798.4 637.9,801.8 643.8,800.6 649.0,802.4 653.4,796.9 660.0,796.9 663.7,794.0 667.2,801.8 673.8,800.6 679.7,799.1 685.6,796.9 694.4,797.6 701.8,799.9 709.1,799.4 712.1,803.2 715.0,798.4 717.2,789.6 720.1,802.1 726.8,802.1 732.6,801.3 737.1,798.4 741.5,798.4 745.1,802.1 749.1,806.5 752.5,798.4 759.1,799.4 763.5,802.4 767.9,799.1 770.9,795.9 773.5,795.9 773.5,863.5" fill="#7EB26D" fill-opacity="0.1" stroke="none"/>
<polygon points="456.2,863.5 456.2,813.1 463.8,813.1 469.7,813.1 477.1,812.4 484.4,812.1 491.8,812.6 497.6,813.1 502.1,814.1 510.9,813.8 521.2,813.8 530.0,813.5 535.9,813.8 543.2,814.6 549.1,813.1 555.0,813.8 557.9,810.1 560.9,794.7 563.1,784.4 562.9,784.4 565.9,791.8 568.8,805.0 571.8,806.5 577.6,809.4 585.0,810.6 593.8,810.9 601.2,814.1 608.5,810.9 615.9,813.1 626.2,815.0 635.0,812.4 642.4,813.1 648.2,814.6 655.6,813.5 662.9,813.5 669.4,815.0 673.8,813.5 682.6,813.1 688.5,813.8 694.4,812.4 701.8,813.5 713.5,815.0 723.8,814.1 729.7,813.5 735.6,814.6 738.5,812.6 744.4,816.0 750.3,815.6 756.2,813.1 762.1,814.1 766.5,816.0 770.9,813.8 773.5,814.1 773.5,863.5" fill="#EAB839" fill-opacity="0.1" stroke="none"/>
<polygon points="456.2,863.5 456.2,838.8 459.4,841.8 463.8,844.0 469.0,844.0 472.6,838.1 475.6,840.3 481.5,838.1 485.9,838.8 490.3,840.3 494.7,839.6 497.6,842.5 502.1,838.8 505.7,835.6 509.4,846.2 512.4,841.8 516.8,841.8 522.6,836.6 525.6,844.7 529.3,845.4 532.9,838.1 537.4,845.4 541.0,846.2 545.4,843.2 550.6,834.7 555.0,841.8 560.1,841.8 562.6,819.0 565.9,833.7 570.3,838.1 573.2,839.6 576.9,846.2 582.1,845.9 585.7,840.3 590.9,848.4 595.3,844.0 598.2,846.2 604.1,844.4 608.5,844.7 615.9,847.6 620.3,844.7 627.6,845.4 633.5,848.4 640.9,838.8 646.8,843.2 651.2,835.1 655.6,835.1 660.0,849.1 664.4,841.8 670.9,842.9 675.3,845.4 679.7,843.2 684.1,845.4 687.8,845.4 690.7,834.7 693.7,844.0 700.3,842.9 709.1,843.2 712.1,838.8 715.0,842.9 723.8,843.5 726.8,845.4 730.4,840.3 737.1,842.5 741.5,838.1 746.6,838.1 750.3,842.5 754.7,838.8 759.9,834.7 763.5,841.0 767.9,847.6 773.5,846.2 773.5,863.5" fill="#6ED0E0" fill-opacity="0.1" stroke="none"/>
<polygon points="836.4,863.5 836.4,809.4 844.9,809.4 848.5,812.6 859.1,812.6 861.9,807.0 870.4,807.0 873.2,812.2 876.1,812.6 878.9,815.0 887.4,815.0 890.2,817.9 893.1,815.0 907.2,815.0 910.1,820.3 912.9,817.4 920.7,817.4 925.7,822.8 929.2,822.8 932.0,825.7 934.9,817.4 943.4,817.4 945.5,801.6 949.7,750.3 957.5,750.3 963.2,777.2 968.1,777.2 976.6,808.7 980.2,809.4 983.0,815.0 1002.8,815.0 1002.8,815.0 1005.7,817.9 1014.2,817.9 1017.0,823.1 1022.0,823.1 1025.5,817.4 1033.3,817.4 1036.8,823.1 1047.5,823.1 1051.0,825.9 1055.9,825.9 1062.3,815.0 1070.8,815.0 1073.7,817.9 1089.9,817.9 1092.8,820.3 1101.3,820.3 1104.1,817.4 1118.3,817.4 1121.1,820.3 1138.1,820.3 1140.9,817.4 1148.7,817.4 1153.0,825.4 1160.1,825.4 1164.3,828.8 1168.6,825.7 1171.4,825.7 1171.4,863.5" fill="#7EB26D" fill-opacity="0.1" stroke="none"/>
<polygon points="836.4,863.5 836.4,828.5 842.1,825.7 849.2,823.5 856.2,824.2 863.3,824.0 870.4,825.4 877.5,824.9 884.6,826.4 891.7,826.4 894.5,825.4 898.7,825.7 905.8,828.8 912.9,830.6 920.0,832.0 925.7,833.9 934.2,833.9 939.8,832.5 944.1,829.2 948.3,818.6 954.0,804.4 957.5,801.3 963.2,804.1 968.1,812.2 975.2,823.5 982.3,827.8 989.4,829.6 996.5,828.8 1000.0,828.5 1007.1,829.6 1012.7,830.2 1017.0,832.7 1022.7,834.4 1028.3,833.0 1034.0,833.9 1039.7,835.8 1048.2,835.8 1055.2,834.9 1060.9,831.6 1068.0,829.2 1076.5,829.6 1083.6,831.0 1089.9,832.5 1096.3,831.0 1106.2,831.0 1111.9,828.5 1117.6,829.2 1124.6,831.0 1130.3,831.3 1136.0,830.6 1141.6,832.5 1147.3,833.9 1154.4,834.9 1158.6,836.3 1164.3,835.8 1171.4,836.3 1171.4,863.5" fill="#EAB839" fill-opacity="0.1" stroke="none"/>
<polygon points="836.4,863.5 836.4,839.5 842.1,839.5 844.9,834.2 887.4,834.2 890.2,831.3 895.9,839.1 898.7,839.8 901.6,842.4 940.5,842.4 946.9,836.3 949.0,836.3 956.8,823.5 959.6,825.7 963.2,826.4 968.9,834.2 974.5,834.2 977.4,836.7 985.8,836.7 988.7,839.5 1000.0,839.5 1000.0,839.5 1005.7,841.9 1018.4,841.9 1022.7,844.3 1031.2,844.3 1034.7,841.9 1039.0,844.3 1047.5,844.3 1051.0,841.9 1070.1,841.9 1073.7,839.5 1077.9,841.9 1086.4,841.9 1089.2,839.5 1096.3,839.5 1099.2,841.9 1106.2,841.9 1110.5,836.7 1113.3,836.7 1115.4,834.2 1119.0,839.5 1128.9,839.5 1132.4,841.9 1154.4,841.9 1157.2,844.3 1171.4,844.3 1171.4,863.5" fill="#6ED0E0" fill-opacity="0.1" stroke="none"/>
<polygon points="1228.0,863.5 1228.0,863.0 1569.4,863.0 1569.4,863.5" fill="#7EB26D" fill-opacity="0.0" stroke="none"/>
<polygon points="1228.0,863.5 1228.0,746.1 1231.1,747.4 1237.6,755.7 1276.5,755.7 1283.0,753.1 1288.1,755.7 1334.8,755.7 1340.0,753.1 1350.4,758.3 1391.8,758.3 1397.0,755.7 1402.2,758.3 1448.9,758.3 1454.1,755.7 1459.2,758.3 1465.7,763.7 1472.2,763.7 1477.4,766.3 1482.6,766.3 1489.0,771.8 1569.4,771.8 1569.4,863.5" fill="#6ED0E0" fill-opacity="0.1" stroke="none"/>
<polygon points="1228.0,863.5 1228.0,852.4 1242.8,852.4 1248.0,855.5 1334.8,855.5 1340.0,852.4 1505.9,852.4 1512.4,849.8 1517.6,852.4 1534.4,852.4 1540.9,855.5 1564.2,855.5 1569.4,852.4 1569.4,863.5" fill="#EF843C" fill-opacity="0.1" stroke="none"/>
<polygon points="1228.0,863.5 1228.0,863.0 1569.4,863.0 1569.4,863.5" fill="#EF843C" fill-opacity="0.0" stroke="none"/>
<line x1="54.4" y1="95.5" x2="776" y2="95.5" stroke="rgba(210,210,222,0.17)" stroke-width="1"/>
<line x1="54.4" y1="112.5" x2="776" y2="112.5" stroke="rgba(210,210,222,0.17)" stroke-width="1"/>
<line x1="54.4" y1="129.5" x2="776" y2="129.5" stroke="rgba(210,210,222,0.17)" stroke-width="1"/>
<line x1="54.4" y1="145.5" x2="776" y2="145.5" stroke="rgba(210,210,222,0.17)" stroke-width="1"/>
<line x1="54.4" y1="162.5" x2="776" y2="162.5" stroke="rgba(210,210,222,0.17)" stroke-width="1"/>
<line x1="84.5" y1="95.3" x2="84.5" y2="162.8" stroke="rgba(210,210,222,0.19)" stroke-width="1"/>
<line x1="132.5" y1="95.3" x2="132.5" y2="162.8" stroke="rgba(210,210,222,0.19)" stroke-width="1"/>
<line x1="180.5" y1="95.3" x2="180.5" y2="162.8" stroke="rgba(210,210,222,0.19)" stroke-width="1"/>
<line x1="229.5" y1="95.3" x2="229.5" y2="162.8" stroke="rgba(210,210,222,0.19)" stroke-width="1"/>
<line x1="277.5" y1="95.3" x2="277.5" y2="162.8" stroke="rgba(210,210,222,0.19)" stroke-width="1"/>
<line x1="325.5" y1="95.3" x2="325.5" y2="162.8" stroke="rgba(210,210,222,0.19)" stroke-width="1"/>
<line x1="373.5" y1="95.3" x2="373.5" y2="162.8" stroke="rgba(210,210,222,0.19)" stroke-width="1"/>
<line x1="422.5" y1="95.3" x2="422.5" y2="162.8" stroke="rgba(210,210,222,0.19)" stroke-width="1"/>
<line x1="470.5" y1="95.3" x2="470.5" y2="162.8" stroke="rgba(210,210,222,0.19)" stroke-width="1"/>
<line x1="518.5" y1="95.3" x2="518.5" y2="162.8" stroke="rgba(210,210,222,0.19)" stroke-width="1"/>
<line x1="566.5" y1="95.3" x2="566.5" y2="162.8" stroke="rgba(210,210,222,0.19)" stroke-width="1"/>
<line x1="614.5" y1="95.3" x2="614.5" y2="162.8" stroke="rgba(210,210,222,0.19)" stroke-width="1"/>
<line x1="663.5" y1="95.3" x2="663.5" y2="162.8" stroke="rgba(210,210,222,0.19)" stroke-width="1"/>
<line x1="711.5" y1="95.3" x2="711.5" y2="162.8" stroke="rgba(210,210,222,0.19)" stroke-width="1"/>
<line x1="759.5" y1="95.3" x2="759.5" y2="162.8" stroke="rgba(210,210,222,0.19)" stroke-width="1"/>
<line x1="853.3" y1="95.5" x2="1571.8" y2="95.5" stroke="rgba(210,210,222,0.17)" stroke-width="1"/>
<line x1="853.3" y1="117.5" x2="1571.8" y2="117.5" stroke="rgba(210,210,222,0.17)" stroke-width="1"/>
<line x1="853.3" y1="140.5" x2="1571.8" y2="140.5" stroke="rgba(210,210,222,0.17)" stroke-width="1"/>
<line x1="853.3" y1="162.5" x2="1571.8" y2="162.5" stroke="rgba(210,210,222,0.17)" stroke-width="1"/>
<line x1="883.5" y1="95.3" x2="883.5" y2="162.8" stroke="rgba(210,210,222,0.19)" stroke-width="1"/>
<line x1="931.5" y1="95.3" x2="931.5" y2="162.8" stroke="rgba(210,210,222,0.19)" stroke-width="1"/>
<line x1="979.5" y1="95.3" x2="979.5" y2="162.8" stroke="rgba(210,210,222,0.19)" stroke-width="1"/>
<line x1="1027.5" y1="95.3" x2="1027.5" y2="162.8" stroke="rgba(210,210,222,0.19)" stroke-width="1"/>
<line x1="1075.5" y1="95.3" x2="1075.5" y2="162.8" stroke="rgba(210,210,222,0.19)" stroke-width="1"/>
<line x1="1123.5" y1="95.3" x2="1123.5" y2="162.8" stroke="rgba(210,210,222,0.19)" stroke-width="1"/>
<line x1="1171.5" y1="95.3" x2="1171.5" y2="162.8" stroke="rgba(210,210,222,0.19)" stroke-width="1"/>
<line x1="1219.5" y1="95.3" x2="1219.5" y2="162.8" stroke="rgba(210,210,222,0.19)" stroke-width="1"/>
<line x1="1267.5" y1="95.3" x2="1267.5" y2="162.8" stroke="rgba(210,210,222,0.19)" stroke-width="1"/>
<line x1="1315.5" y1="95.3" x2="1315.5" y2="162.8" stroke="rgba(210,210,222,0.19)" stroke-width="1"/>
<line x1="1362.5" y1="95.3" x2="1362.5" y2="162.8" stroke="rgba(210,210,222,0.19)" stroke-width="1"/>
<line x1="1410.5" y1="95.3" x2="1410.5" y2="162.8" stroke="rgba(210,210,222,0.19)" stroke-width="1"/>
<line x1="1458.5" y1="95.3" x2="1458.5" y2="162.8" stroke="rgba(210,210,222,0.19)" stroke-width="1"/>
<line x1="1506.5" y1="95.3" x2="1506.5" y2="162.8" stroke="rgba(210,210,222,0.19)" stroke-width="1"/>
<line x1="1554.5" y1="95.3" x2="1554.5" y2="162.8" stroke="rgba(210,210,222,0.19)" stroke-width="1"/>
<line x1="52" y1="262.5" x2="775.8" y2="262.5" stroke="rgba(210,210,222,0.17)" stroke-width="1"/>
<line x1="52" y1="284.5" x2="775.8" y2="284.5" stroke="rgba(210,210,222,0.17)" stroke-width="1"/>
<line x1="52" y1="306.5" x2="775.8" y2="306.5" stroke="rgba(210,210,222,0.17)" stroke-width="1"/>
<line x1="52" y1="329.5" x2="775.8" y2="329.5" stroke="rgba(210,210,222,0.17)" stroke-width="1"/>
<line x1="82.5" y1="262.2" x2="82.5" y2="329.2" stroke="rgba(210,210,222,0.19)" stroke-width="1"/>
<line x1="131.5" y1="262.2" x2="131.5" y2="329.2" stroke="rgba(210,210,222,0.19)" stroke-width="1"/>
<line x1="179.5" y1="262.2" x2="179.5" y2="329.2" stroke="rgba(210,210,222,0.19)" stroke-width="1"/>
<line x1="227.5" y1="262.2" x2="227.5" y2="329.2" stroke="rgba(210,210,222,0.19)" stroke-width="1"/>
<line x1="275.5" y1="262.2" x2="275.5" y2="329.2" stroke="rgba(210,210,222,0.19)" stroke-width="1"/>
<line x1="324.5" y1="262.2" x2="324.5" y2="329.2" stroke="rgba(210,210,222,0.19)" stroke-width="1"/>
<line x1="372.5" y1="262.2" x2="372.5" y2="329.2" stroke="rgba(210,210,222,0.19)" stroke-width="1"/>
<line x1="420.5" y1="262.2" x2="420.5" y2="329.2" stroke="rgba(210,210,222,0.19)" stroke-width="1"/>
<line x1="468.5" y1="262.2" x2="468.5" y2="329.2" stroke="rgba(210,210,222,0.19)" stroke-width="1"/>
<line x1="516.5" y1="262.2" x2="516.5" y2="329.2" stroke="rgba(210,210,222,0.19)" stroke-width="1"/>
<line x1="564.5" y1="262.2" x2="564.5" y2="329.2" stroke="rgba(210,210,222,0.19)" stroke-width="1"/>
<line x1="613.5" y1="262.2" x2="613.5" y2="329.2" stroke="rgba(210,210,222,0.19)" stroke-width="1"/>
<line x1="661.5" y1="262.2" x2="661.5" y2="329.2" stroke="rgba(210,210,222,0.19)" stroke-width="1"/>
<line x1="709.5" y1="262.2" x2="709.5" y2="329.2" stroke="rgba(210,210,222,0.19)" stroke-width="1"/>
<line x1="757.5" y1="262.2" x2="757.5" y2="329.2" stroke="rgba(210,210,222,0.19)" stroke-width="1"/>
<line x1="856" y1="261.5" x2="1571.8" y2="261.5" stroke="rgba(210,210,222,0.17)" stroke-width="1"/>
<line x1="856" y1="284.5" x2="1571.8" y2="284.5" stroke="rgba(210,210,222,0.17)" stroke-width="1"/>
<line x1="856" y1="306.5" x2="1571.8" y2="306.5" stroke="rgba(210,210,222,0.17)" stroke-width="1"/>
<line x1="856" y1="329.5" x2="1571.8" y2="329.5" stroke="rgba(210,210,222,0.17)" stroke-width="1"/>
<line x1="886.5" y1="261.8" x2="886.5" y2="329.2" stroke="rgba(210,210,222,0.19)" stroke-width="1"/>
<line x1="934.5" y1="261.8" x2="934.5" y2="329.2" stroke="rgba(210,210,222,0.19)" stroke-width="1"/>
<line x1="981.5" y1="261.8" x2="981.5" y2="329.2" stroke="rgba(210,210,222,0.19)" stroke-width="1"/>
<line x1="1029.5" y1="261.8" x2="1029.5" y2="329.2" stroke="rgba(210,210,222,0.19)" stroke-width="1"/>
<line x1="1077.5" y1="261.8" x2="1077.5" y2="329.2" stroke="rgba(210,210,222,0.19)" stroke-width="1"/>
<line x1="1124.5" y1="261.8" x2="1124.5" y2="329.2" stroke="rgba(210,210,222,0.19)" stroke-width="1"/>
<line x1="1172.5" y1="261.8" x2="1172.5" y2="329.2" stroke="rgba(210,210,222,0.19)" stroke-width="1"/>
<line x1="1220.5" y1="261.8" x2="1220.5" y2="329.2" stroke="rgba(210,210,222,0.19)" stroke-width="1"/>
<line x1="1268.5" y1="261.8" x2="1268.5" y2="329.2" stroke="rgba(210,210,222,0.19)" stroke-width="1"/>
<line x1="1315.5" y1="261.8" x2="1315.5" y2="329.2" stroke="rgba(210,210,222,0.19)" stroke-width="1"/>
<line x1="1363.5" y1="261.8" x2="1363.5" y2="329.2" stroke="rgba(210,210,222,0.19)" stroke-width="1"/>
<line x1="1411.5" y1="261.8" x2="1411.5" y2="329.2" stroke="rgba(210,210,222,0.19)" stroke-width="1"/>
<line x1="1459.5" y1="261.8" x2="1459.5" y2="329.2" stroke="rgba(210,210,222,0.19)" stroke-width="1"/>
<line x1="1506.5" y1="261.8" x2="1506.5" y2="329.2" stroke="rgba(210,210,222,0.19)" stroke-width="1"/>
<line x1="1554.5" y1="261.8" x2="1554.5" y2="329.2" stroke="rgba(210,210,222,0.19)" stroke-width="1"/>
<line x1="72.1" y1="729.5" x2="378" y2="729.5" stroke="rgba(210,210,222,0.17)" stroke-width="1"/>
<line x1="72.1" y1="774.5" x2="378" y2="774.5" stroke="rgba(210,210,222,0.17)" stroke-width="1"/>
<line x1="72.1" y1="818.5" x2="378" y2="818.5" stroke="rgba(210,210,222,0.17)" stroke-width="1"/>
<line x1="72.1" y1="863.5" x2="378" y2="863.5" stroke="rgba(210,210,222,0.17)" stroke-width="1"/>
<line x1="115.5" y1="729.4" x2="115.5" y2="863.7" stroke="rgba(210,210,222,0.19)" stroke-width="1"/>
<line x1="166.5" y1="729.4" x2="166.5" y2="863.7" stroke="rgba(210,210,222,0.19)" stroke-width="1"/>
<line x1="217.5" y1="729.4" x2="217.5" y2="863.7" stroke="rgba(210,210,222,0.19)" stroke-width="1"/>
<line x1="268.5" y1="729.4" x2="268.5" y2="863.7" stroke="rgba(210,210,222,0.19)" stroke-width="1"/>
<line x1="319.5" y1="729.4" x2="319.5" y2="863.7" stroke="rgba(210,210,222,0.19)" stroke-width="1"/>
<line x1="370.5" y1="729.4" x2="370.5" y2="863.7" stroke="rgba(210,210,222,0.19)" stroke-width="1"/>
<line x1="456" y1="729.5" x2="775.9" y2="729.5" stroke="rgba(210,210,222,0.17)" stroke-width="1"/>
<line x1="456" y1="751.5" x2="775.9" y2="751.5" stroke="rgba(210,210,222,0.17)" stroke-width="1"/>
<line x1="456" y1="774.5" x2="775.9" y2="774.5" stroke="rgba(210,210,222,0.17)" stroke-width="1"/>
<line x1="456" y1="796.5" x2="775.9" y2="796.5" stroke="rgba(210,210,222,0.17)" stroke-width="1"/>
<line x1="456" y1="818.5" x2="775.9" y2="818.5" stroke="rgba(210,210,222,0.17)" stroke-width="1"/>
<line x1="456" y1="841.5" x2="775.9" y2="841.5" stroke="rgba(210,210,222,0.17)" stroke-width="1"/>
<line x1="456" y1="863.5" x2="775.9" y2="863.5" stroke="rgba(210,210,222,0.17)" stroke-width="1"/>
<line x1="501.5" y1="729.3" x2="501.5" y2="863.5" stroke="rgba(210,210,222,0.19)" stroke-width="1"/>
<line x1="554.5" y1="729.3" x2="554.5" y2="863.5" stroke="rgba(210,210,222,0.19)" stroke-width="1"/>
<line x1="608.5" y1="729.3" x2="608.5" y2="863.5" stroke="rgba(210,210,222,0.19)" stroke-width="1"/>
<line x1="661.5" y1="729.3" x2="661.5" y2="863.5" stroke="rgba(210,210,222,0.19)" stroke-width="1"/>
<line x1="714.5" y1="729.3" x2="714.5" y2="863.5" stroke="rgba(210,210,222,0.19)" stroke-width="1"/>
<line x1="768.5" y1="729.3" x2="768.5" y2="863.5" stroke="rgba(210,210,222,0.19)" stroke-width="1"/>
<line x1="836.3" y1="729.5" x2="1173.8" y2="729.5" stroke="rgba(210,210,222,0.17)" stroke-width="1"/>
<line x1="836.3" y1="756.5" x2="1173.8" y2="756.5" stroke="rgba(210,210,222,0.17)" stroke-width="1"/>
<line x1="836.3" y1="782.5" x2="1173.8" y2="782.5" stroke="rgba(210,210,222,0.17)" stroke-width="1"/>
<line x1="836.3" y1="809.5" x2="1173.8" y2="809.5" stroke="rgba(210,210,222,0.17)" stroke-width="1"/>
<line x1="836.3" y1="836.5" x2="1173.8" y2="836.5" stroke="rgba(210,210,222,0.17)" stroke-width="1"/>
<line x1="836.3" y1="863.5" x2="1173.8" y2="863.5" stroke="rgba(210,210,222,0.17)" stroke-width="1"/>
<line x1="884.5" y1="729.3" x2="884.5" y2="863.5" stroke="rgba(210,210,222,0.19)" stroke-width="1"/>
<line x1="940.5" y1="729.3" x2="940.5" y2="863.5" stroke="rgba(210,210,222,0.19)" stroke-width="1"/>
<line x1="996.5" y1="729.3" x2="996.5" y2="863.5" stroke="rgba(210,210,222,0.19)" stroke-width="1"/>
<line x1="1053.5" y1="729.3" x2="1053.5" y2="863.5" stroke="rgba(210,210,222,0.19)" stroke-width="1"/>
<line x1="1109.5" y1="729.3" x2="1109.5" y2="863.5" stroke="rgba(210,210,222,0.19)" stroke-width="1"/>
<line x1="1165.5" y1="729.3" x2="1165.5" y2="863.5" stroke="rgba(210,210,222,0.19)" stroke-width="1"/>
<line x1="1228" y1="729.5" x2="1572" y2="729.5" stroke="rgba(210,210,222,0.17)" stroke-width="1"/>
<line x1="1228" y1="756.5" x2="1572" y2="756.5" stroke="rgba(210,210,222,0.17)" stroke-width="1"/>
<line x1="1228" y1="782.5" x2="1572" y2="782.5" stroke="rgba(210,210,222,0.17)" stroke-width="1"/>
<line x1="1228" y1="809.5" x2="1572" y2="809.5" stroke="rgba(210,210,222,0.17)" stroke-width="1"/>
<line x1="1228" y1="836.5" x2="1572" y2="836.5" stroke="rgba(210,210,222,0.17)" stroke-width="1"/>
<line x1="1228" y1="863.5" x2="1572" y2="863.5" stroke="rgba(210,210,222,0.17)" stroke-width="1"/>
<line x1="1276.5" y1="729.3" x2="1276.5" y2="863.5" stroke="rgba(210,210,222,0.19)" stroke-width="1"/>
<line x1="1334.5" y1="729.3" x2="1334.5" y2="863.5" stroke="rgba(210,210,222,0.19)" stroke-width="1"/>
<line x1="1391.5" y1="729.3" x2="1391.5" y2="863.5" stroke="rgba(210,210,222,0.19)" stroke-width="1"/>
<line x1="1448.5" y1="729.3" x2="1448.5" y2="863.5" stroke="rgba(210,210,222,0.19)" stroke-width="1"/>
<line x1="1506.5" y1="729.3" x2="1506.5" y2="863.5" stroke="rgba(210,210,222,0.19)" stroke-width="1"/>
<line x1="1563.5" y1="729.3" x2="1563.5" y2="863.5" stroke="rgba(210,210,222,0.19)" stroke-width="1"/>
<polyline points="84.7,148.3 97.4,148.3" fill="none" stroke="#7EB26D" stroke-width="1.2" stroke-linejoin="round"/>
<polyline points="121.2,148.3 157.1,148.3" fill="none" stroke="#7EB26D" stroke-width="1.2" stroke-linejoin="round"/>
<polyline points="181.4,148.3 193.4,148.3" fill="none" stroke="#7EB26D" stroke-width="1.2" stroke-linejoin="round"/>
<polyline points="301.4,120.1 337.9,120.1" fill="none" stroke="#7EB26D" stroke-width="1.2" stroke-linejoin="round"/>
<polyline points="734.4,148.3 746.7,148.3" fill="none" stroke="#7EB26D" stroke-width="1.2" stroke-linejoin="round"/>
<polyline points="853.4,112.8 883.5,111.3 919.5,111.7 955.2,112.1 979.4,112.4 1027.2,113.2 1075.6,113.6 1087.4,111.9 1099.2,106.2 1111.4,106.2 1123.4,107.6 1135.2,109.1 1147.1,111.3 1159.4,111.9 1171.3,112.4 1183.1,113.0 1205.0,113.0 1219.0,113.2 1267.5,113.6 1314.8,114.1 1327.1,114.3 1350.8,113.0 1363.1,112.4 1380.0,113.2 1400.0,113.1 1425.0,113.8 1481.0,113.8 1506.0,115.0 1537.5,115.2 1566.2,115.6" fill="none" stroke="#7EB26D" stroke-width="1.3" stroke-linejoin="round"/>
<polyline points="853.4,139.4 859.6,138.3 871.4,133.8 883.5,131.6 895.6,132.7 907.4,134.6 919.5,134.6 931.6,134.6 943.4,136.1 955.2,138.1 967.6,137.5 979.4,137.4 991.2,138.9 1003.6,139.8 1015.4,140.0 1027.2,140.2 1075.6,140.0 1087.4,133.8 1099.2,116.4 1111.4,113.6 1123.4,116.9 1135.2,124.2 1147.1,132.1 1159.4,135.5 1171.3,139.4 1183.1,140.0 1566.2,140.6" fill="none" stroke="#EAB839" stroke-width="1.3" stroke-linejoin="round"/>
<polyline points="853.4,141.7 883.5,140.9 1027.2,141.7 1075.6,142.0 1087.4,141.1 1099.2,128.2 1111.4,122.6 1123.4,127.6 1135.2,140.0 1147.1,141.1 1171.3,141.7 1205.0,142.0 1362.0,141.3 1400.0,141.9 1566.2,142.5" fill="none" stroke="#6ED0E0" stroke-width="1.3" stroke-linejoin="round"/>
<polyline points="853.4,147.6 883.5,144.5 919.5,146.2 955.2,147.0 979.4,147.3 1027.2,147.9 1075.6,147.9 1087.4,147.3 1099.2,143.4 1111.4,141.1 1123.4,142.2 1135.2,143.9 1147.1,145.1 1159.4,145.8 1171.3,146.5 1183.1,147.1 1205.0,147.3 1267.5,147.9 1314.8,148.4 1338.0,148.1 1350.8,146.2 1363.1,145.6 1380.0,146.5 1446.0,147.5 1506.0,148.5 1566.2,148.8" fill="none" stroke="#EF843C" stroke-width="1.3" stroke-linejoin="round"/>
<polyline points="853.4,153.2 883.5,151.0 919.5,152.4 955.2,152.9 1027.2,153.3 1087.4,153.3 1099.2,151.2 1111.4,148.4 1123.4,149.0 1135.2,150.7 1147.1,151.8 1159.4,152.4 1171.3,152.7 1205.0,152.9 1350.8,152.6 1363.1,152.1 1380.0,152.5 1566.2,153.4" fill="none" stroke="#E24D42" stroke-width="1.3" stroke-linejoin="round"/>
<polyline points="52.2,271.8 59.0,273.0 70.2,275.2 82.2,275.7 95.0,276.4 106.2,276.8 119.0,276.4 131.0,276.4 143.0,276.8 167.0,277.5 191.0,277.5 203.0,277.5 215.0,278.7 227.0,279.8 239.8,280.5 251.0,280.2 275.0,280.2 287.0,278.2 300.0,270.0 311.7,265.5 323.2,270.0 336.0,278.2 348.0,281.2 360.0,282.8 372.0,282.8 396.0,283.5 420.0,283.5 444.0,284.2 468.0,285.0 480.0,285.8 504.0,286.2 520.0,285.9 531.4,286.7 553.3,289.1 565.5,289.1 589.9,290.4 601.2,290.8 614.2,289.6 650.0,289.6 682.5,289.4 710.1,290.4 723.1,290.8 745.9,290.4 758.9,291.6 770.2,294.0" fill="none" stroke="#7EB26D" stroke-width="1.3" stroke-linejoin="round"/>
<polyline points="52.2,329.4 770.2,329.4" fill="none" stroke="#EAB839" stroke-width="1.3" stroke-linejoin="round"/>
<polyline points="52.2,328.8 70.0,328.1 85.0,328.1 200.0,328.8 323.0,328.1 372.0,328.6 450.0,328.6 553.0,328.1 565.0,328.1 614.0,328.9 770.2,329.0" fill="none" stroke="#6ED0E0" stroke-width="1.3" stroke-linejoin="round"/>
<polyline points="856.0,286.8 862.0,286.0 874.0,282.0 886.0,279.4 898.0,280.8 910.0,282.4 922.0,283.2 934.0,283.9 946.0,285.0 958.0,285.8 982.0,286.2 1006.0,286.8 1030.0,287.2 1054.0,287.6 1076.5,288.0 1088.8,286.5 1100.8,276.8 1112.8,266.7 1124.8,270.8 1136.8,277.5 1148.8,282.0 1160.8,284.2 1172.8,285.8 1184.8,286.5 1196.8,286.8 1208.8,286.8 1220.8,287.2 1244.8,287.7 1268.8,288.0 1292.8,288.3 1328.1,288.3 1339.5,287.5 1351.7,285.1 1363.5,283.9 1375.2,284.8 1387.4,285.4 1399.6,285.9 1411.8,286.7 1423.2,287.0 1435.4,287.2 1459.8,287.5 1482.5,287.5 1494.7,288.0 1506.9,288.6 1518.2,289.1 1541.0,289.1 1566.7,289.1" fill="none" stroke="#7EB26D" stroke-width="1.3" stroke-linejoin="round"/>
<polyline points="856.0,329.2 1566.7,329.2" fill="none" stroke="#EAB839" stroke-width="1.6" stroke-linejoin="round"/>
<polyline points="874.0,314.2 886.0,315.0 898.0,311.2 910.0,304.2 922.0,304.2 934.0,306.8 946.0,308.2 958.0,309.4 970.0,306.8 982.0,304.8 1006.0,304.8 1017.2,309.8" fill="none" stroke="#6ED0E0" stroke-width="1.3" stroke-linejoin="round"/>
<polyline points="1077.2,312.3 1085.0,312.3 1101.5,312.0 1112.8,311.2 1124.8,311.2 1136.8,309.3 1148.8,305.6 1160.8,305.2 1172.8,305.7 1184.8,306.0 1196.8,307.8 1208.8,306.8 1220.8,303.0 1232.8,302.2 1244.0,307.5" fill="none" stroke="#6ED0E0" stroke-width="1.3" stroke-linejoin="round"/>
<polyline points="1280.0,312.8 1304.0,313.5 1316.0,314.7 1320.0,314.8 1339.5,313.8 1363.5,313.2 1375.2,310.2 1387.4,306.2 1399.6,306.2 1411.8,309.1 1423.2,307.3 1435.4,307.0 1446.8,309.9 1459.8,308.6 1471.1,305.4 1482.5,306.2 1494.7,311.1 1506.9,313.5 1518.2,313.2 1529.6,312.7 1541.0,313.2 1554.0,313.5 1566.7,313.8" fill="none" stroke="#6ED0E0" stroke-width="1.3" stroke-linejoin="round"/>
<polyline points="72.2,808.5 74.8,807.3 80.2,802.5 85.0,797.4 89.8,797.4 95.2,800.1 100.6,802.2 105.4,803.1 110.7,805.5 115.5,806.1 120.9,807.3 125.7,807.3 131.1,808.2 135.9,809.1 141.3,811.3 146.7,813.7 151.5,814.5 156.3,813.7 161.7,813.3 166.5,814.9 171.9,806.1 176.7,779.2 182.1,771.4 186.9,774.1 192.2,795.4 197.0,804.3 202.4,809.1 207.8,810.9 212.6,812.7 218.0,813.7 222.8,814.5 228.2,813.9 229.8,812.7 237.6,814.5 243.0,817.3 247.8,817.8 253.2,818.1 258.0,817.8 263.4,818.5 268.7,819.0 273.5,818.7 278.9,815.4 283.7,813.3 288.5,811.8 293.9,812.7 299.3,813.3 304.1,809.4 309.5,811.3 314.3,811.8 319.7,812.7 325.1,813.3 329.9,813.9 334.7,814.2 340.1,812.7 344.8,813.9 350.2,814.5 355.6,815.4 360.4,814.9 365.8,814.5 370.6,815.4 375.4,817.8" fill="none" stroke="#7EB26D" stroke-width="1.3" stroke-linejoin="round"/>
<polyline points="72.2,827.1 74.8,826.5 80.2,822.6 85.0,821.7 89.8,820.2 95.2,822.1 100.6,823.8 105.4,822.6 110.7,824.4 115.5,825.9 120.9,825.3 125.7,825.7 131.1,826.8 135.9,827.8 141.3,828.3 146.7,829.2 151.5,830.5 156.3,829.2 161.7,829.3 166.5,830.1 171.9,825.9 176.7,811.5 182.1,804.6 186.9,805.5 192.2,818.7 197.0,822.9 202.4,825.9 207.8,827.5 212.6,828.3 218.0,828.9 222.8,830.1 228.2,829.5 229.8,829.8 237.6,831.3 243.0,829.8 247.8,830.5 253.2,831.7 258.0,832.6 263.4,832.1 268.7,832.9 273.5,833.7 278.9,831.9 283.7,830.7 288.5,829.5 293.9,829.8 299.3,829.8 304.1,830.1 309.5,827.7 314.3,828.9 319.7,829.3 325.1,828.6 329.9,829.5 334.7,830.1 340.1,830.1 344.8,829.9 350.2,830.9 355.6,830.9 360.4,830.9 365.8,831.7 370.6,832.5 375.4,831.9" fill="none" stroke="#EAB839" stroke-width="2.0" stroke-linejoin="round"/>
<polyline points="72.2,845.1 74.8,849.6 80.2,834.1 85.0,837.9 89.8,838.1 95.2,833.9 100.6,843.7 105.4,830.1 110.7,837.3 115.5,838.1 120.9,836.5 125.7,836.1 131.1,845.3 135.9,842.1 141.3,845.7 146.7,843.3 151.5,841.5 156.3,841.3 161.7,840.1 166.5,841.3 171.9,845.1 176.7,849.3 182.1,819.3 186.9,830.7 192.2,831.3 197.0,834.9 202.4,845.1 207.8,837.3 212.6,837.9 218.0,836.7 222.8,842.5 228.2,837.9 229.8,838.5 237.6,843.7 243.0,835.7 247.8,840.5 253.2,839.7 258.0,840.3 263.4,842.1 268.7,843.1 273.5,842.1 278.9,847.5 283.7,853.5 289.1,836.7 293.9,843.9 299.3,850.5 304.1,852.9 309.5,841.7 314.3,844.5 319.7,843.9 325.1,840.3 329.9,841.3 334.7,844.5 340.1,842.1 344.8,842.9 350.2,842.7 355.6,839.7 360.4,840.9 365.8,842.7 370.6,844.5 375.4,842.1" fill="none" stroke="#6ED0E0" stroke-width="1.3" stroke-linejoin="round"/>
<polyline points="72.2,855.9 74.8,854.7 80.2,855.9 85.0,853.7 89.8,853.7 95.2,855.3 100.6,854.7 105.4,855.6 110.7,855.9 115.5,855.3 120.9,856.1 125.7,856.5 131.1,855.3 135.9,855.9 141.3,856.5 146.7,857.1 151.5,857.3 156.3,857.7 161.7,856.5 166.5,857.7 171.9,855.3 176.7,849.9 182.1,851.3 186.9,850.1 192.2,854.7 197.0,855.9 202.4,855.9 207.8,856.8 212.6,856.8 218.0,857.1 222.8,856.5 228.2,857.1 229.8,857.1 237.6,857.1 243.0,857.3 247.8,858.0 253.2,857.7 258.0,857.7 263.4,857.7 268.7,857.3 273.5,857.7 278.9,857.1 283.7,855.6 289.1,857.1 293.9,855.9 299.3,854.4 304.1,853.7 309.5,855.3 314.3,855.6 319.7,855.3 325.1,855.6 329.9,856.1 334.7,855.3 340.1,855.9 344.8,855.6 350.2,855.9 355.6,856.5 360.4,856.1 365.8,855.9 370.6,856.5 375.4,856.5" fill="none" stroke="#EF843C" stroke-width="2.0" stroke-linejoin="round"/>
<polyline points="456.2,791.8 458.7,791.8 460.9,797.6 463.8,801.3 466.8,796.9 469.7,796.2 472.6,798.4 477.1,796.9 481.5,792.5 485.9,796.2 491.0,802.1 494.7,794.7 497.6,792.5 502.1,804.3 507.2,800.6 510.9,802.1 515.3,796.2 518.2,796.2 521.2,800.6 525.6,799.1 530.0,802.4 533.7,797.9 537.4,801.3 541.8,801.3 544.7,802.4 549.1,798.4 553.5,799.1 555.7,799.1 558.7,782.9 560.9,756.5 563.1,743.2 568.1,743.2 570.3,795.4 573.2,791.8 576.2,794.7 582.1,796.2 587.9,797.9 593.8,797.6 598.2,790.3 602.6,795.4 607.1,793.5 614.4,795.4 618.8,796.2 622.5,802.8 626.9,798.4 632.1,798.4 637.9,801.8 643.8,800.6 649.0,802.4 653.4,796.9 660.0,796.9 663.7,794.0 667.2,801.8 673.8,800.6 679.7,799.1 685.6,796.9 694.4,797.6 701.8,799.9 709.1,799.4 712.1,803.2 715.0,798.4 717.2,789.6 720.1,802.1 726.8,802.1 732.6,801.3 737.1,798.4 741.5,798.4 745.1,802.1 749.1,806.5 752.5,798.4 759.1,799.4 763.5,802.4 767.9,799.1 770.9,795.9 773.5,795.9" fill="none" stroke="#7EB26D" stroke-width="1.3" stroke-linejoin="round"/>
<polyline points="456.2,813.1 463.8,813.1 469.7,813.1 477.1,812.4 484.4,812.1 491.8,812.6 497.6,813.1 502.1,814.1 510.9,813.8 521.2,813.8 530.0,813.5 535.9,813.8 543.2,814.6 549.1,813.1 555.0,813.8 557.9,810.1 560.9,794.7 563.1,784.4 562.9,784.4 565.9,791.8 568.8,805.0 571.8,806.5 577.6,809.4 585.0,810.6 593.8,810.9 601.2,814.1 608.5,810.9 615.9,813.1 626.2,815.0 635.0,812.4 642.4,813.1 648.2,814.6 655.6,813.5 662.9,813.5 669.4,815.0 673.8,813.5 682.6,813.1 688.5,813.8 694.4,812.4 701.8,813.5 713.5,815.0 723.8,814.1 729.7,813.5 735.6,814.6 738.5,812.6 744.4,816.0 750.3,815.6 756.2,813.1 762.1,814.1 766.5,816.0 770.9,813.8 773.5,814.1" fill="none" stroke="#EAB839" stroke-width="1.3" stroke-linejoin="round"/>
<polyline points="456.2,838.8 459.4,841.8 463.8,844.0 469.0,844.0 472.6,838.1 475.6,840.3 481.5,838.1 485.9,838.8 490.3,840.3 494.7,839.6 497.6,842.5 502.1,838.8 505.7,835.6 509.4,846.2 512.4,841.8 516.8,841.8 522.6,836.6 525.6,844.7 529.3,845.4 532.9,838.1 537.4,845.4 541.0,846.2 545.4,843.2 550.6,834.7 555.0,841.8 560.1,841.8 562.6,819.0 565.9,833.7 570.3,838.1 573.2,839.6 576.9,846.2 582.1,845.9 585.7,840.3 590.9,848.4 595.3,844.0 598.2,846.2 604.1,844.4 608.5,844.7 615.9,847.6 620.3,844.7 627.6,845.4 633.5,848.4 640.9,838.8 646.8,843.2 651.2,835.1 655.6,835.1 660.0,849.1 664.4,841.8 670.9,842.9 675.3,845.4 679.7,843.2 684.1,845.4 687.8,845.4 690.7,834.7 693.7,844.0 700.3,842.9 709.1,843.2 712.1,838.8 715.0,842.9 723.8,843.5 726.8,845.4 730.4,840.3 737.1,842.5 741.5,838.1 746.6,838.1 750.3,842.5 754.7,838.8 759.9,834.7 763.5,841.0 767.9,847.6 773.5,846.2" fill="none" stroke="#6ED0E0" stroke-width="1.3" stroke-linejoin="round"/>
<polyline points="836.4,809.4 844.9,809.4 848.5,812.6 859.1,812.6 861.9,807.0 870.4,807.0 873.2,812.2 876.1,812.6 878.9,815.0 887.4,815.0 890.2,817.9 893.1,815.0 907.2,815.0 910.1,820.3 912.9,817.4 920.7,817.4 925.7,822.8 929.2,822.8 932.0,825.7 934.9,817.4 943.4,817.4 945.5,801.6 949.7,750.3 957.5,750.3 963.2,777.2 968.1,777.2 976.6,808.7 980.2,809.4 983.0,815.0 1002.8,815.0 1002.8,815.0 1005.7,817.9 1014.2,817.9 1017.0,823.1 1022.0,823.1 1025.5,817.4 1033.3,817.4 1036.8,823.1 1047.5,823.1 1051.0,825.9 1055.9,825.9 1062.3,815.0 1070.8,815.0 1073.7,817.9 1089.9,817.9 1092.8,820.3 1101.3,820.3 1104.1,817.4 1118.3,817.4 1121.1,820.3 1138.1,820.3 1140.9,817.4 1148.7,817.4 1153.0,825.4 1160.1,825.4 1164.3,828.8 1168.6,825.7 1171.4,825.7" fill="none" stroke="#7EB26D" stroke-width="1.3" stroke-linejoin="round"/>
<polyline points="836.4,828.5 842.1,825.7 849.2,823.5 856.2,824.2 863.3,824.0 870.4,825.4 877.5,824.9 884.6,826.4 891.7,826.4 894.5,825.4 898.7,825.7 905.8,828.8 912.9,830.6 920.0,832.0 925.7,833.9 934.2,833.9 939.8,832.5 944.1,829.2 948.3,818.6 954.0,804.4 957.5,801.3 963.2,804.1 968.1,812.2 975.2,823.5 982.3,827.8 989.4,829.6 996.5,828.8 1000.0,828.5 1007.1,829.6 1012.7,830.2 1017.0,832.7 1022.7,834.4 1028.3,833.0 1034.0,833.9 1039.7,835.8 1048.2,835.8 1055.2,834.9 1060.9,831.6 1068.0,829.2 1076.5,829.6 1083.6,831.0 1089.9,832.5 1096.3,831.0 1106.2,831.0 1111.9,828.5 1117.6,829.2 1124.6,831.0 1130.3,831.3 1136.0,830.6 1141.6,832.5 1147.3,833.9 1154.4,834.9 1158.6,836.3 1164.3,835.8 1171.4,836.3" fill="none" stroke="#EAB839" stroke-width="1.3" stroke-linejoin="round"/>
<polyline points="836.4,839.5 842.1,839.5 844.9,834.2 887.4,834.2 890.2,831.3 895.9,839.1 898.7,839.8 901.6,842.4 940.5,842.4 946.9,836.3 949.0,836.3 956.8,823.5 959.6,825.7 963.2,826.4 968.9,834.2 974.5,834.2 977.4,836.7 985.8,836.7 988.7,839.5 1000.0,839.5 1000.0,839.5 1005.7,841.9 1018.4,841.9 1022.7,844.3 1031.2,844.3 1034.7,841.9 1039.0,844.3 1047.5,844.3 1051.0,841.9 1070.1,841.9 1073.7,839.5 1077.9,841.9 1086.4,841.9 1089.2,839.5 1096.3,839.5 1099.2,841.9 1106.2,841.9 1110.5,836.7 1113.3,836.7 1115.4,834.2 1119.0,839.5 1128.9,839.5 1132.4,841.9 1154.4,841.9 1157.2,844.3 1171.4,844.3" fill="none" stroke="#6ED0E0" stroke-width="1.3" stroke-linejoin="round"/>
<polyline points="1228.0,863.0 1569.4,863.0" fill="none" stroke="#7EB26D" stroke-width="1.3" stroke-linejoin="round"/>
<polyline points="1228.0,746.1 1231.1,747.4 1237.6,755.7 1276.5,755.7 1283.0,753.1 1288.1,755.7 1334.8,755.7 1340.0,753.1 1350.4,758.3 1391.8,758.3 1397.0,755.7 1402.2,758.3 1448.9,758.3 1454.1,755.7 1459.2,758.3 1465.7,763.7 1472.2,763.7 1477.4,766.3 1482.6,766.3 1489.0,771.8 1569.4,771.8" fill="none" stroke="#6ED0E0" stroke-width="1.3" stroke-linejoin="round"/>
<polyline points="1228.0,852.4 1242.8,852.4 1248.0,855.5 1334.8,855.5 1340.0,852.4 1505.9,852.4 1512.4,849.8 1517.6,852.4 1534.4,852.4 1540.9,855.5 1564.2,855.5 1569.4,852.4" fill="none" stroke="#EF843C" stroke-width="1.3" stroke-linejoin="round"/>
<polyline points="1228.0,863.0 1569.4,863.0" fill="none" stroke="#EF843C" stroke-width="1.6" stroke-linejoin="round"/>
<rect x="25.5" y="194.3" width="12.5" height="3.6" rx="1" fill="#73bf69"/>
<text x="45.3" y="198.7" font-family="Liberation Sans" font-size="10.6" fill="#d0d1da" text-anchor="start" font-weight="normal" stroke="#d0d1da" stroke-width="0.3">{grpc_code="Canceled", grpc_method="Bid"}</text>
<rect x="821.4" y="194.3" width="12.5" height="3.6" rx="1" fill="#73bf69"/>
<text x="840.9" y="198.7" font-family="Liberation Sans" font-size="10.6" fill="#d0d1da" text-anchor="start" font-weight="normal" stroke="#d0d1da" stroke-width="0.3">0.99</text>
<rect x="870.6" y="194.3" width="12.5" height="3.6" rx="1" fill="#f2c23c"/>
<text x="890" y="198.7" font-family="Liberation Sans" font-size="10.6" fill="#d0d1da" text-anchor="start" font-weight="normal" stroke="#d0d1da" stroke-width="0.3">0.95</text>
<rect x="920" y="194.3" width="12.5" height="3.6" rx="1" fill="#5bcbe6"/>
<text x="939.2" y="198.7" font-family="Liberation Sans" font-size="10.6" fill="#d0d1da" text-anchor="start" font-weight="normal" stroke="#d0d1da" stroke-width="0.3">0.90</text>
<rect x="969.2" y="194.3" width="12.5" height="3.6" rx="1" fill="#ff8b3a"/>
<text x="988.4" y="198.7" font-family="Liberation Sans" font-size="10.6" fill="#d0d1da" text-anchor="start" font-weight="normal" stroke="#d0d1da" stroke-width="0.3">0.75</text>
<rect x="1018.3" y="194.3" width="12.5" height="3.6" rx="1" fill="#e8463f"/>
<text x="1037.5" y="198.7" font-family="Liberation Sans" font-size="10.6" fill="#d0d1da" text-anchor="start" font-weight="normal" stroke="#d0d1da" stroke-width="0.3">0.50</text>
<rect x="25.5" y="360.3" width="12.5" height="3.6" rx="1" fill="#73bf69"/>
<text x="44.8" y="366.0" font-family="Liberation Sans" font-size="10.6" fill="#d0d1da" text-anchor="start" font-weight="normal" stroke="#d0d1da" stroke-width="0.3">Bid</text>
<rect x="69.5" y="360.3" width="12.5" height="3.6" rx="1" fill="#f2c23c"/>
<text x="88.6" y="366.0" font-family="Liberation Sans" font-size="10.6" fill="#d0d1da" text-anchor="start" font-weight="normal" stroke="#d0d1da" stroke-width="0.3">Check</text>
<rect x="127.3" y="360.3" width="12.5" height="3.6" rx="1" fill="#5bcbe6"/>
<text x="146.5" y="366.0" font-family="Liberation Sans" font-size="10.6" fill="#d0d1da" text-anchor="start" font-weight="normal" stroke="#d0d1da" stroke-width="0.3">Index</text>
<rect x="821.4" y="360.3" width="12.5" height="3.6" rx="1" fill="#73bf69"/>
<text x="840.7" y="366.0" font-family="Liberation Sans" font-size="10.6" fill="#d0d1da" text-anchor="start" font-weight="normal" stroke="#d0d1da" stroke-width="0.3">Bid</text>
<rect x="865.5" y="360.3" width="12.5" height="3.6" rx="1" fill="#f2c23c"/>
<text x="884.6" y="366.0" font-family="Liberation Sans" font-size="10.6" fill="#d0d1da" text-anchor="start" font-weight="normal" stroke="#d0d1da" stroke-width="0.3">Check</text>
<rect x="923.3" y="360.3" width="12.5" height="3.6" rx="1" fill="#5bcbe6"/>
<text x="942.5" y="366.0" font-family="Liberation Sans" font-size="10.6" fill="#d0d1da" text-anchor="start" font-weight="normal" stroke="#d0d1da" stroke-width="0.3">Index</text>
<rect x="25.5" y="895.5" width="12.5" height="3.6" rx="1" fill="#73bf69"/>
<text x="44.8" y="899.9" font-family="Liberation Sans" font-size="10.6" fill="#d0d1da" text-anchor="start" font-weight="normal" stroke="#d0d1da" stroke-width="0.3">max</text>
<rect x="73.9" y="895.5" width="12.5" height="3.6" rx="1" fill="#f2c23c"/>
<text x="93.6" y="899.9" font-family="Liberation Sans" font-size="10.6" fill="#d0d1da" text-anchor="start" font-weight="normal" stroke="#d0d1da" stroke-width="0.3">avg</text>
<rect x="119.5" y="895.5" width="12.5" height="3.6" rx="1" fill="#5bcbe6"/>
<text x="138.6" y="899.9" font-family="Liberation Sans" font-size="10.6" fill="#d0d1da" text-anchor="start" font-weight="normal" stroke="#d0d1da" stroke-width="0.3">min</text>
<rect x="165" y="895.5" width="12.5" height="3.6" rx="1" fill="#ff8b3a"/>
<text x="184.7" y="899.9" font-family="Liberation Sans" font-size="10.6" fill="#d0d1da" text-anchor="start" font-weight="normal" stroke="#d0d1da" stroke-width="0.3">stddev</text>
<rect x="423.5" y="895.5" width="12.5" height="3.6" rx="1" fill="#73bf69"/>
<text x="442.8" y="899.9" font-family="Liberation Sans" font-size="10.6" fill="#d0d1da" text-anchor="start" font-weight="normal" stroke="#d0d1da" stroke-width="0.3">max</text>
<rect x="471.9" y="895.5" width="12.5" height="3.6" rx="1" fill="#f2c23c"/>
<text x="491.6" y="899.9" font-family="Liberation Sans" font-size="10.6" fill="#d0d1da" text-anchor="start" font-weight="normal" stroke="#d0d1da" stroke-width="0.3">avg</text>
<rect x="517.5" y="895.5" width="12.5" height="3.6" rx="1" fill="#5bcbe6"/>
<text x="536.6" y="899.9" font-family="Liberation Sans" font-size="10.6" fill="#d0d1da" text-anchor="start" font-weight="normal" stroke="#d0d1da" stroke-width="0.3">min</text>
<rect x="821.5" y="895.5" width="12.5" height="3.6" rx="1" fill="#73bf69"/>
<text x="840.8" y="899.9" font-family="Liberation Sans" font-size="10.6" fill="#d0d1da" text-anchor="start" font-weight="normal" stroke="#d0d1da" stroke-width="0.3">max</text>
<rect x="869.9" y="895.5" width="12.5" height="3.6" rx="1" fill="#f2c23c"/>
<text x="889.6" y="899.9" font-family="Liberation Sans" font-size="10.6" fill="#d0d1da" text-anchor="start" font-weight="normal" stroke="#d0d1da" stroke-width="0.3">avg</text>
<rect x="915.5" y="895.5" width="12.5" height="3.6" rx="1" fill="#5bcbe6"/>
<text x="934.6" y="899.9" font-family="Liberation Sans" font-size="10.6" fill="#d0d1da" text-anchor="start" font-weight="normal" stroke="#d0d1da" stroke-width="0.3">min</text>
<rect x="1219.5" y="895.5" width="12.5" height="3.6" rx="1" fill="#73bf69"/>
<text x="1238.8" y="899.9" font-family="Liberation Sans" font-size="10.6" fill="#d0d1da" text-anchor="start" font-weight="normal" stroke="#d0d1da" stroke-width="0.3">Failed</text>
<rect x="1276.8" y="895.5" width="12.5" height="3.6" rx="1" fill="#f2c23c"/>
<text x="1296" y="899.9" font-family="Liberation Sans" font-size="10.6" fill="#d0d1da" text-anchor="start" font-weight="normal" stroke="#d0d1da" stroke-width="0.3">Pending</text>
<rect x="1343.2" y="895.5" width="12.5" height="3.6" rx="1" fill="#5bcbe6"/>
<text x="1363.5" y="899.9" font-family="Liberation Sans" font-size="10.6" fill="#d0d1da" text-anchor="start" font-weight="normal" stroke="#d0d1da" stroke-width="0.3">Running</text>
<rect x="1411" y="895.5" width="12.5" height="3.6" rx="1" fill="#ff8b3a"/>
<text x="1430.5" y="899.9" font-family="Liberation Sans" font-size="10.6" fill="#d0d1da" text-anchor="start" font-weight="normal" stroke="#d0d1da" stroke-width="0.3">Succeeded</text>
<rect x="1492" y="895.5" width="12.5" height="3.6" rx="1" fill="#e8463f"/>
<text x="1511.5" y="899.9" font-family="Liberation Sans" font-size="10.6" fill="#d0d1da" text-anchor="start" font-weight="normal" stroke="#d0d1da" stroke-width="0.3">Unknown</text>
<defs><clipPath id="logclip"><rect x="15" y="418" width="1572" height="219.5"/></clipPath></defs>
<g clip-path="url(#logclip)">
<rect x="20.2" y="422.5" width="2.8" height="15.0" rx="0" fill="#73bf69"/>
<path d="M27.4,426.5 l3.2,3 l-3.2,3" fill="none" stroke="#b9bac4" stroke-width="1.2"/>
<text x="36.4" y="434.1" font-family="Liberation Mono" font-size="10.77" fill="#d2d3dd" text-anchor="start" font-weight="normal" stroke="#d2d3dd" stroke-width="0.3">{"level":"info","ts":1636559443.429754,"caller":"application/instrument.go:27","msg":"","auction":"5295f439-75f3-40cf-b2a6-f0c8fb0f9510","created":0.999992988}</text>
<rect x="20.2" y="440.05" width="2.8" height="15.0" rx="0" fill="#73bf69"/>
<path d="M27.4,444.1 l3.2,3 l-3.2,3" fill="none" stroke="#b9bac4" stroke-width="1.2"/>
<text x="36.4" y="451.65000000000003" font-family="Liberation Mono" font-size="10.77" fill="#d2d3dd" text-anchor="start" font-weight="normal" stroke="#d2d3dd" stroke-width="0.3">{"level":"info","ts":1636559443.401772,"caller":"zap/options.go:212","msg":"finished unary call with code OK","grpc.start_time":"2021-11-10T15:50:43Z","grpc.request.deadline":"2021-11-10T15:50:44Z","system":"grpc","span.kind":"server","grpc.service":"bidder.v1.BidderService","grpc.method":"Bid"}</text>
<rect x="20.2" y="457.6" width="2.8" height="15.0" rx="0" fill="#73bf69"/>
<path d="M27.4,461.6 l3.2,3 l-3.2,3" fill="none" stroke="#b9bac4" stroke-width="1.2"/>
<text x="36.4" y="469.20000000000005" font-family="Liberation Mono" font-size="10.77" fill="#d2d3dd" text-anchor="start" font-weight="normal" stroke="#d2d3dd" stroke-width="0.3">{"level":"info","ts":1636559443.4013922,"caller":"api/middlewares.go:19","msg":"","method":"Bid","transport_error":null,"took":0.051789465}</text>
<rect x="20.2" y="475.15" width="2.8" height="15.0" rx="0" fill="#73bf69"/>
<path d="M27.4,479.1 l3.2,3 l-3.2,3" fill="none" stroke="#b9bac4" stroke-width="1.2"/>
<text x="36.4" y="486.75" font-family="Liberation Mono" font-size="10.77" fill="#d2d3dd" text-anchor="start" font-weight="normal" stroke="#d2d3dd" stroke-width="0.3">{"level":"info","ts":1636559443.4012697,"caller":"application/instrument.go:27","msg":"","auction":"ab893a72-acfc-4245-bba6-9512db64c898","response":"bid sent","candidates":141,"took":0.039107243}</text>
<rect x="20.2" y="492.7" width="2.8" height="15.0" rx="0" fill="#73bf69"/>
<path d="M27.4,496.7 l3.2,3 l-3.2,3" fill="none" stroke="#b9bac4" stroke-width="1.2"/>
<text x="36.4" y="504.3" font-family="Liberation Mono" font-size="10.77" fill="#d2d3dd" text-anchor="start" font-weight="normal" stroke="#d2d3dd" stroke-width="0.3">{"level":"info","ts":1636559443.3968828,"caller":"application/instrument.go:27","msg":"","auction":"784c045a-8e73-4fc3-8e37-c0cb6e40d65f","created":0.999994136}</text>
<rect x="20.2" y="510.25" width="2.8" height="15.0" rx="0" fill="#73bf69"/>
<path d="M27.4,514.2 l3.2,3 l-3.2,3" fill="none" stroke="#b9bac4" stroke-width="1.2"/>
<text x="36.4" y="521.85" font-family="Liberation Mono" font-size="10.77" fill="#d2d3dd" text-anchor="start" font-weight="normal" stroke="#d2d3dd" stroke-width="0.3">{"level":"info","ts":1636559443.392703,"caller":"zap/options.go:212","msg":"finished unary call with code OK","grpc.start_time":"2021-11-10T15:50:43Z","grpc.request.deadline":"2021-11-10T15:50:44Z","system":"grpc","span.kind":"server","grpc.service":"bidder.v1.BidderService","grpc.method":"Bid"}</text>
<rect x="20.2" y="527.8000000000001" width="2.8" height="15.0" rx="0" fill="#73bf69"/>
<path d="M27.4,531.8 l3.2,3 l-3.2,3" fill="none" stroke="#b9bac4" stroke-width="1.2"/>
<text x="36.4" y="539.4000000000001" font-family="Liberation Mono" font-size="10.77" fill="#d2d3dd" text-anchor="start" font-weight="normal" stroke="#d2d3dd" stroke-width="0.3">{"level":"info","ts":1636559443.3926723,"caller":"api/middlewares.go:19","msg":"","method":"Bid","transport_error":null,"took":0.017327821}</text>
<rect x="20.2" y="545.35" width="2.8" height="15.0" rx="0" fill="#73bf69"/>
<path d="M27.4,549.4 l3.2,3 l-3.2,3" fill="none" stroke="#b9bac4" stroke-width="1.2"/>
<text x="36.4" y="556.95" font-family="Liberation Mono" font-size="10.77" fill="#d2d3dd" text-anchor="start" font-weight="normal" stroke="#d2d3dd" stroke-width="0.3">{"level":"info","ts":1636559443.3861465,"caller":"zap/options.go:212","msg":"finished unary call with code OK","grpc.start_time":"2021-11-10T15:50:43Z","grpc.request.deadline":"2021-11-10T15:50:44Z","system":"grpc","span.kind":"server","grpc.service":"bidder.v1.BidderService","grpc.method":"Bid"}</text>
<rect x="20.2" y="562.9" width="2.8" height="15.0" rx="0" fill="#73bf69"/>
<path d="M27.4,566.9 l3.2,3 l-3.2,3" fill="none" stroke="#b9bac4" stroke-width="1.2"/>
<text x="36.4" y="574.5" font-family="Liberation Mono" font-size="10.77" fill="#d2d3dd" text-anchor="start" font-weight="normal" stroke="#d2d3dd" stroke-width="0.3">{"level":"info","ts":1636559443.3860652,"caller":"application/instrument.go:27","msg":"","auction":"e4713f31-76bc-4b1a-a145-d6a8b1c4bf78","created":0.999993187}</text>
<rect x="20.2" y="580.45" width="2.8" height="15.0" rx="0" fill="#73bf69"/>
<path d="M27.4,584.5 l3.2,3 l-3.2,3" fill="none" stroke="#b9bac4" stroke-width="1.2"/>
<text x="36.4" y="592.0500000000001" font-family="Liberation Mono" font-size="10.77" fill="#d2d3dd" text-anchor="start" font-weight="normal" stroke="#d2d3dd" stroke-width="0.3">{"level":"info","ts":1636559443.3858192,"caller":"api/middlewares.go:19","msg":"","method":"Bid","transport_error":null,"took":0.039744327}</text>
<rect x="20.2" y="598.0" width="2.8" height="15.0" rx="0" fill="#73bf69"/>
<path d="M27.4,602.0 l3.2,3 l-3.2,3" fill="none" stroke="#b9bac4" stroke-width="1.2"/>
<text x="36.4" y="609.6" font-family="Liberation Mono" font-size="10.77" fill="#d2d3dd" text-anchor="start" font-weight="normal" stroke="#d2d3dd" stroke-width="0.3">{"level":"info","ts":1636559443.3857965,"caller":"zap/options.go:212","msg":"finished unary call with code OK","grpc.start_time":"2021-11-10T15:50:43Z","grpc.request.deadline":"2021-11-10T15:50:44Z","system":"grpc","span.kind":"server","grpc.service":"bidder.v1.BidderService","grpc.method":"Bid"}</text>
<rect x="20.2" y="615.5500000000001" width="2.8" height="15.0" rx="0" fill="#73bf69"/>
<path d="M27.4,619.6 l3.2,3 l-3.2,3" fill="none" stroke="#b9bac4" stroke-width="1.2"/>
<text x="36.4" y="627.1500000000001" font-family="Liberation Mono" font-size="10.77" fill="#d2d3dd" text-anchor="start" font-weight="normal" stroke="#d2d3dd" stroke-width="0.3">{"level":"info","ts":1636559443.3857346,"caller":"application/instrument.go:27","msg":"","auction":"8aed59f4-3fa1-445f-aad5-488ac833a825","response":"bid sent","candidates":65,"took":0.028010954}</text>
<rect x="20.2" y="633.1" width="2.8" height="15.0" rx="0" fill="#73bf69"/>
<path d="M27.4,637.1 l3.2,3 l-3.2,3" fill="none" stroke="#b9bac4" stroke-width="1.2"/>
<text x="36.4" y="644.7" font-family="Liberation Mono" font-size="10.77" fill="#d2d3dd" text-anchor="start" font-weight="normal" stroke="#d2d3dd" stroke-width="0.3">{"level":"info","ts":1636559443.3856789,"caller":"api/middlewares.go:19","msg":"","method":"Bid","transport_error":null,"took":0.028543211}</text>
</g>
</svg></body></html>
